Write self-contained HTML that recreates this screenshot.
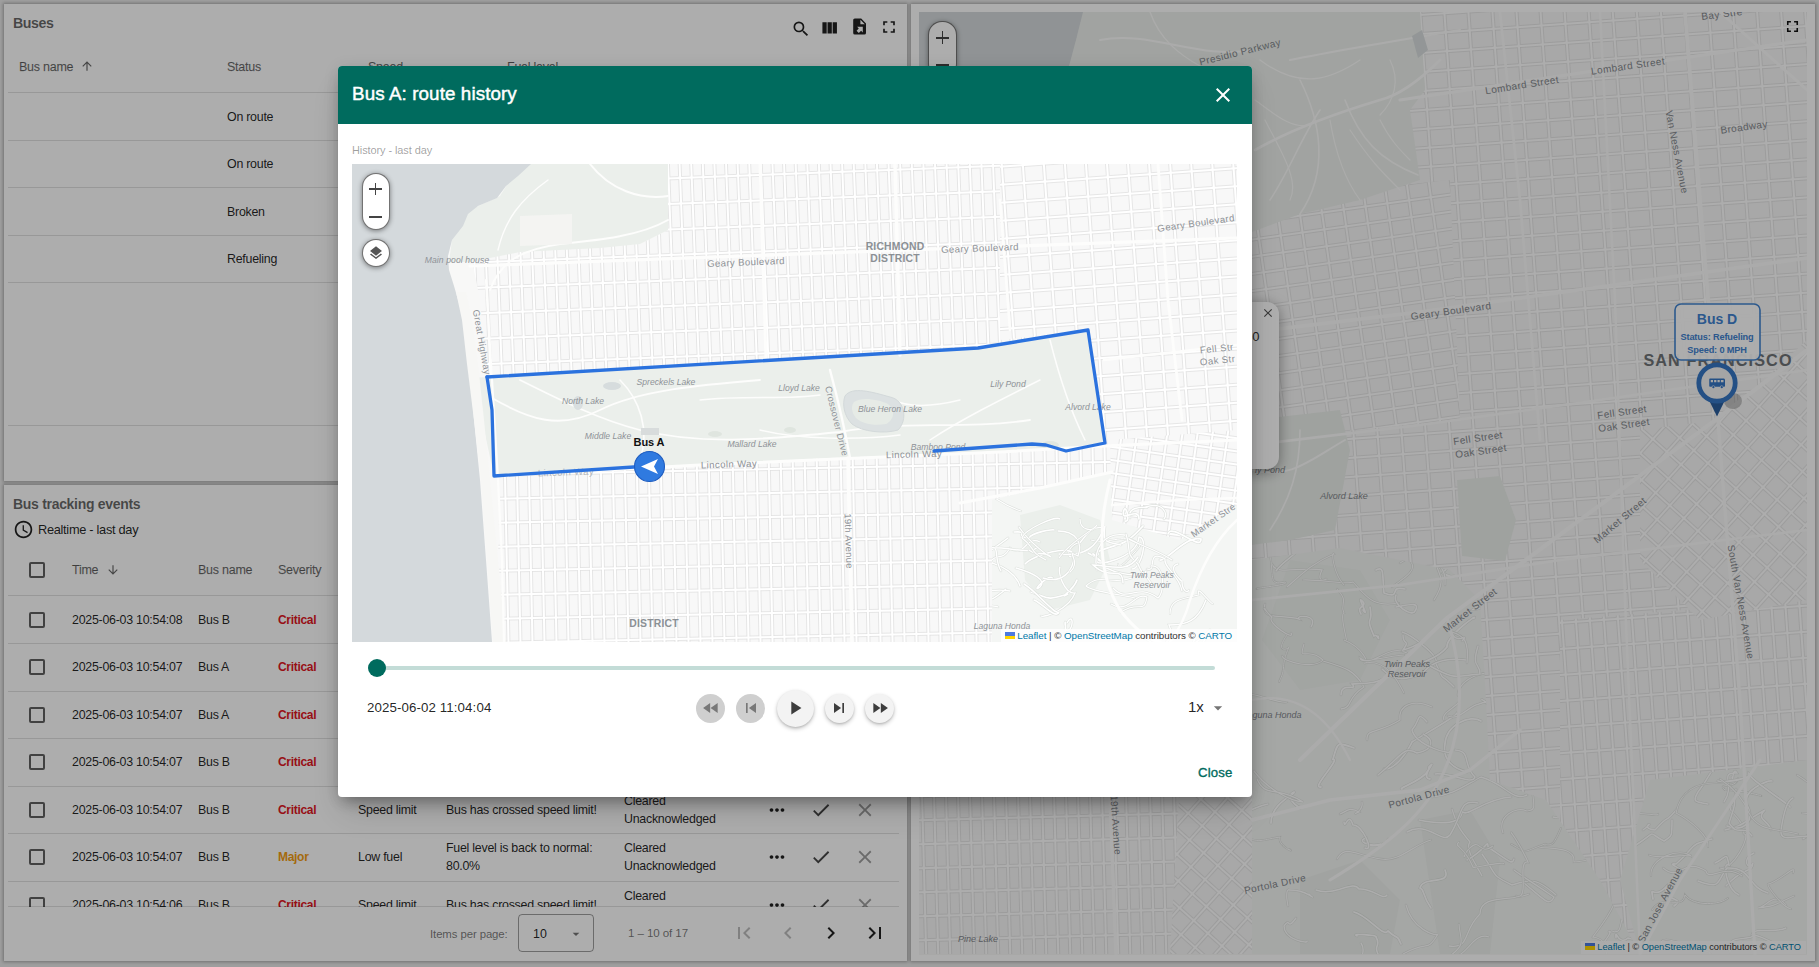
<!DOCTYPE html>
<html><head><meta charset="utf-8"><title>Bus tracking</title>
<style>
*{box-sizing:border-box;margin:0;padding:0}
html,body{width:1819px;height:967px;overflow:hidden}
body{position:relative;background:#e9e9e9;font-family:"Liberation Sans",sans-serif;color:rgba(0,0,0,.87)}
.a{position:absolute;white-space:nowrap}
.w{position:absolute;background:#fff;box-shadow:0 0 3px 1px rgba(0,0,0,.28);overflow:hidden}
.hl{position:absolute;height:1px;background:rgba(0,0,0,.12)}
.th{font-size:12.5px;color:rgba(0,0,0,.56);letter-spacing:-.25px;-webkit-text-stroke:.25px rgba(0,0,0,.4)}
.td{font-size:12.4px;color:rgba(0,0,0,.87);letter-spacing:-.25px}
.crit{color:#e0171f;font-weight:bold;font-size:12px;letter-spacing:-.3px}
.maj{color:#f39c12;font-weight:bold;font-size:12px;letter-spacing:-.3px}
.cb{position:absolute;width:16px;height:16px;border:2px solid rgba(0,0,0,.62);border-radius:2px}
svg.i{position:absolute;overflow:visible}
.ov{position:absolute;left:0;top:0;width:1819px;height:967px;background:rgba(0,0,0,.32)}
.modal{position:absolute;left:338px;top:66px;width:914px;height:731px;background:#fff;border-radius:4px;overflow:hidden;box-shadow:0 8px 14px -5px rgba(0,0,0,.32),0 18px 30px -6px rgba(0,0,0,.16),0 2px 16px 2px rgba(0,0,0,.06)}
.ml{font-size:9.5px;color:#8d9196;font-style:italic;letter-spacing:-.1px}
.mr{font-size:9.5px;color:#9a9ea2;letter-spacing:.2px}
.pbtn{position:absolute;border-radius:50%;background:#f2f2f2;box-shadow:0 2px 4px rgba(0,0,0,.25)}
</style></head>
<body>

<!-- ============ Widget 1: Buses ============ -->
<div class="w" style="left:4px;top:4px;width:903px;height:477px">
  <div class="a" style="left:9px;top:11px;font-size:14.2px;font-weight:bold;color:rgba(0,0,0,.6);letter-spacing:-.45px;line-height:16px">Buses</div>
  <!-- toolbar icons -->
  <svg class="i" style="left:787px;top:14.5px" width="20" height="20" viewBox="0 0 24 24"><path fill="rgba(0,0,0,.87)" d="M15.5 14h-.79l-.28-.27A6.471 6.471 0 0 0 16 9.5 6.5 6.5 0 1 0 9.5 16c1.61 0 3.09-.59 4.23-1.57l.27.28v.79l5 4.99L20.49 19l-4.99-5zm-6 0C7.01 14 5 11.99 5 9.5S7.01 5 9.5 5 14 7.01 14 9.5 11.99 14 9.5 14z"/></svg>
  <svg class="i" style="left:815.2px;top:14.1px" width="20.5" height="20.5" viewBox="0 0 24 24"><path fill="rgba(0,0,0,.87)" d="M10 18h5V5h-5v13zm-6 0h5V5H4v13zM16 5v13h5V5h-5z"/></svg>
  <svg class="i" style="left:845.8px;top:13.4px" width="19.2" height="19.2" viewBox="0 0 24 24"><path fill="rgba(0,0,0,.87)" d="M6 2C4.89 2 4 2.9 4 4v16a2 2 0 0 0 2 2h12a2 2 0 0 0 2-2V8l-6-6H6m7 1.5L18.5 9H13V3.5M8.9 12.2H16v7.1l-2.1-2.1-2.9 2.8-2.8-2.8 2.8-2.9-2.1-2.1z"/></svg>
  <svg class="i" style="left:874.5px;top:13.4px" width="20" height="20" viewBox="0 0 24 24"><path fill="rgba(0,0,0,.87)" d="M7 14H5v5h5v-2H7v-3zm-2-4h2V7h3V5H5v5zm12 7h-3v2h5v-5h-2v3zM14 5v2h3v3h2V5h-5z"/></svg>
  <!-- header -->
  <div class="a th" style="left:15px;top:55px;line-height:16px">Bus name</div>
  <svg class="i" style="left:76px;top:55px" width="14" height="14" viewBox="0 0 24 24"><path fill="rgba(0,0,0,.6)" d="M4 12l1.41 1.41L11 7.83V20h2V7.83l5.58 5.59L20 12l-8-8-8 8z"/></svg>
  <div class="a th" style="left:223px;top:55px;line-height:16px">Status</div>
  <div class="a th" style="left:364px;top:55px;line-height:16px">Speed</div>
  <div class="a th" style="left:503px;top:55px;line-height:16px">Fuel level</div>
  <div class="hl" style="left:4px;top:88px;width:891px"></div>
  <div class="a td" style="left:223px;top:105px;line-height:16px">On route</div>
  <div class="hl" style="left:4px;top:136px;width:891px"></div>
  <div class="a td" style="left:223px;top:152px;line-height:16px">On route</div>
  <div class="hl" style="left:4px;top:183px;width:891px"></div>
  <div class="a td" style="left:223px;top:200px;line-height:16px">Broken</div>
  <div class="hl" style="left:4px;top:231px;width:891px"></div>
  <div class="a td" style="left:223px;top:247px;line-height:16px">Refueling</div>
  <div class="hl" style="left:4px;top:278px;width:891px"></div>
  <div class="hl" style="left:4px;top:421px;width:891px"></div>
</div>

<!-- ============ Widget 2: Bus tracking events ============ -->
<div class="w" style="left:4px;top:485px;width:903px;height:476px">
  <div class="a" style="left:9px;top:11px;font-size:14px;font-weight:bold;color:rgba(0,0,0,.6);letter-spacing:-.3px;line-height:16px">Bus tracking events</div>
  <svg class="i" style="left:9px;top:34px" width="21" height="21" viewBox="0 0 24 24"><path fill="rgba(0,0,0,.87)" d="M11.99 2C6.47 2 2 6.48 2 12s4.47 10 9.99 10C17.52 22 22 17.52 22 12S17.52 2 11.99 2zM12 20c-4.42 0-8-3.58-8-8s3.58-8 8-8 8 3.58 8 8-3.58 8-8 8zm.5-13H11v6l5.25 3.15.75-1.23-4.5-2.67z"/></svg>
  <div class="a" style="left:34px;top:37px;font-size:12.8px;color:rgba(0,0,0,.87);letter-spacing:-.3px;line-height:16px">Realtime - last day</div>
  <!-- header -->
  <div class="cb" style="left:25px;top:77px"></div>
  <div class="a th" style="left:68px;top:77px;line-height:16px">Time</div>
  <svg class="i" style="left:102px;top:78px" width="14" height="14" viewBox="0 0 24 24"><path fill="rgba(0,0,0,.6)" d="M20 12l-1.41-1.41L13 16.17V4h-2v12.17l-5.58-5.59L4 12l8 8 8-8z"/></svg>
  <div class="a th" style="left:194px;top:77px;line-height:16px">Bus name</div>
  <div class="a th" style="left:274px;top:77px;line-height:16px">Severity</div>
  <div class="hl" style="left:4px;top:110px;width:891px"></div>
  <div class="cb" style="left:25px;top:126.5px"></div>
  <div class="a td" style="left:68px;top:126.5px;line-height:16px">2025-06-03 10:54:08</div>
  <div class="a td" style="left:194px;top:126.5px;line-height:16px">Bus B</div>
  <div class="a crit" style="left:274px;top:126.5px;line-height:16px">Critical</div>
  <div class="a td" style="left:354px;top:126.5px;line-height:16px">Speed limit</div>
  <div class="a td" style="left:442px;top:126.5px;line-height:16px">Bus has crossed speed limit!</div>
  <div class="a td" style="left:620px;top:117.5px;line-height:16px">Cleared</div>
  <div class="a td" style="left:620px;top:135.5px;line-height:16px">Unacknowledged</div>
  <svg class="i" style="left:762px;top:123.5px" width="22" height="22" viewBox="0 0 24 24"><path fill="rgba(0,0,0,.87)" d="M6 10c-1.1 0-2 .9-2 2s.9 2 2 2 2-.9 2-2-.9-2-2-2zm12 0c-1.1 0-2 .9-2 2s.9 2 2 2 2-.9 2-2-.9-2-2-2zm-6 0c-1.1 0-2 .9-2 2s.9 2 2 2 2-.9 2-2-.9-2-2-2z"/></svg>
  <svg class="i" style="left:806px;top:123.5px" width="22" height="22" viewBox="0 0 24 24"><path fill="rgba(0,0,0,.72)" d="M9 16.17L4.83 12l-1.42 1.41L9 19 21 7l-1.41-1.41z"/></svg>
  <svg class="i" style="left:850px;top:123.5px" width="22" height="22" viewBox="0 0 24 24"><path fill="rgba(0,0,0,.38)" d="M19 6.41L17.59 5 12 10.59 6.41 5 5 6.41 10.59 12 5 17.59 6.41 19 12 13.41 17.59 19 19 17.59 13.41 12z"/></svg>
  <div class="hl" style="left:4px;top:158.0px;width:891px"></div>
  <div class="cb" style="left:25px;top:174.0px"></div>
  <div class="a td" style="left:68px;top:174.0px;line-height:16px">2025-06-03 10:54:07</div>
  <div class="a td" style="left:194px;top:174.0px;line-height:16px">Bus A</div>
  <div class="a crit" style="left:274px;top:174.0px;line-height:16px">Critical</div>
  <div class="a td" style="left:354px;top:174.0px;line-height:16px">Speed limit</div>
  <div class="a td" style="left:442px;top:174.0px;line-height:16px">Bus has crossed speed limit!</div>
  <div class="a td" style="left:620px;top:165.0px;line-height:16px">Cleared</div>
  <div class="a td" style="left:620px;top:183.0px;line-height:16px">Unacknowledged</div>
  <svg class="i" style="left:762px;top:171.0px" width="22" height="22" viewBox="0 0 24 24"><path fill="rgba(0,0,0,.87)" d="M6 10c-1.1 0-2 .9-2 2s.9 2 2 2 2-.9 2-2-.9-2-2-2zm12 0c-1.1 0-2 .9-2 2s.9 2 2 2 2-.9 2-2-.9-2-2-2zm-6 0c-1.1 0-2 .9-2 2s.9 2 2 2 2-.9 2-2-.9-2-2-2z"/></svg>
  <svg class="i" style="left:806px;top:171.0px" width="22" height="22" viewBox="0 0 24 24"><path fill="rgba(0,0,0,.72)" d="M9 16.17L4.83 12l-1.42 1.41L9 19 21 7l-1.41-1.41z"/></svg>
  <svg class="i" style="left:850px;top:171.0px" width="22" height="22" viewBox="0 0 24 24"><path fill="rgba(0,0,0,.38)" d="M19 6.41L17.59 5 12 10.59 6.41 5 5 6.41 10.59 12 5 17.59 6.41 19 12 13.41 17.59 19 19 17.59 13.41 12z"/></svg>
  <div class="hl" style="left:4px;top:205.5px;width:891px"></div>
  <div class="cb" style="left:25px;top:221.5px"></div>
  <div class="a td" style="left:68px;top:221.5px;line-height:16px">2025-06-03 10:54:07</div>
  <div class="a td" style="left:194px;top:221.5px;line-height:16px">Bus A</div>
  <div class="a crit" style="left:274px;top:221.5px;line-height:16px">Critical</div>
  <div class="a td" style="left:354px;top:221.5px;line-height:16px">Low fuel</div>
  <div class="a td" style="left:442px;top:221.5px;line-height:16px">Fuel level is low: 15.0%</div>
  <div class="a td" style="left:620px;top:212.5px;line-height:16px">Cleared</div>
  <div class="a td" style="left:620px;top:230.5px;line-height:16px">Unacknowledged</div>
  <svg class="i" style="left:762px;top:218.5px" width="22" height="22" viewBox="0 0 24 24"><path fill="rgba(0,0,0,.87)" d="M6 10c-1.1 0-2 .9-2 2s.9 2 2 2 2-.9 2-2-.9-2-2-2zm12 0c-1.1 0-2 .9-2 2s.9 2 2 2 2-.9 2-2-.9-2-2-2zm-6 0c-1.1 0-2 .9-2 2s.9 2 2 2 2-.9 2-2-.9-2-2-2z"/></svg>
  <svg class="i" style="left:806px;top:218.5px" width="22" height="22" viewBox="0 0 24 24"><path fill="rgba(0,0,0,.72)" d="M9 16.17L4.83 12l-1.42 1.41L9 19 21 7l-1.41-1.41z"/></svg>
  <svg class="i" style="left:850px;top:218.5px" width="22" height="22" viewBox="0 0 24 24"><path fill="rgba(0,0,0,.38)" d="M19 6.41L17.59 5 12 10.59 6.41 5 5 6.41 10.59 12 5 17.59 6.41 19 12 13.41 17.59 19 19 17.59 13.41 12z"/></svg>
  <div class="hl" style="left:4px;top:253.0px;width:891px"></div>
  <div class="cb" style="left:25px;top:269.0px"></div>
  <div class="a td" style="left:68px;top:269.0px;line-height:16px">2025-06-03 10:54:07</div>
  <div class="a td" style="left:194px;top:269.0px;line-height:16px">Bus B</div>
  <div class="a crit" style="left:274px;top:269.0px;line-height:16px">Critical</div>
  <div class="a td" style="left:354px;top:269.0px;line-height:16px">Speed limit</div>
  <div class="a td" style="left:442px;top:269.0px;line-height:16px">Bus has crossed speed limit!</div>
  <div class="a td" style="left:620px;top:260.0px;line-height:16px">Cleared</div>
  <div class="a td" style="left:620px;top:278.0px;line-height:16px">Unacknowledged</div>
  <svg class="i" style="left:762px;top:266.0px" width="22" height="22" viewBox="0 0 24 24"><path fill="rgba(0,0,0,.87)" d="M6 10c-1.1 0-2 .9-2 2s.9 2 2 2 2-.9 2-2-.9-2-2-2zm12 0c-1.1 0-2 .9-2 2s.9 2 2 2 2-.9 2-2-.9-2-2-2zm-6 0c-1.1 0-2 .9-2 2s.9 2 2 2 2-.9 2-2-.9-2-2-2z"/></svg>
  <svg class="i" style="left:806px;top:266.0px" width="22" height="22" viewBox="0 0 24 24"><path fill="rgba(0,0,0,.72)" d="M9 16.17L4.83 12l-1.42 1.41L9 19 21 7l-1.41-1.41z"/></svg>
  <svg class="i" style="left:850px;top:266.0px" width="22" height="22" viewBox="0 0 24 24"><path fill="rgba(0,0,0,.38)" d="M19 6.41L17.59 5 12 10.59 6.41 5 5 6.41 10.59 12 5 17.59 6.41 19 12 13.41 17.59 19 19 17.59 13.41 12z"/></svg>
  <div class="hl" style="left:4px;top:300.5px;width:891px"></div>
  <div class="cb" style="left:25px;top:316.5px"></div>
  <div class="a td" style="left:68px;top:316.5px;line-height:16px">2025-06-03 10:54:07</div>
  <div class="a td" style="left:194px;top:316.5px;line-height:16px">Bus B</div>
  <div class="a crit" style="left:274px;top:316.5px;line-height:16px">Critical</div>
  <div class="a td" style="left:354px;top:316.5px;line-height:16px">Speed limit</div>
  <div class="a td" style="left:442px;top:316.5px;line-height:16px">Bus has crossed speed limit!</div>
  <div class="a td" style="left:620px;top:307.5px;line-height:16px">Cleared</div>
  <div class="a td" style="left:620px;top:325.5px;line-height:16px">Unacknowledged</div>
  <svg class="i" style="left:762px;top:313.5px" width="22" height="22" viewBox="0 0 24 24"><path fill="rgba(0,0,0,.87)" d="M6 10c-1.1 0-2 .9-2 2s.9 2 2 2 2-.9 2-2-.9-2-2-2zm12 0c-1.1 0-2 .9-2 2s.9 2 2 2 2-.9 2-2-.9-2-2-2zm-6 0c-1.1 0-2 .9-2 2s.9 2 2 2 2-.9 2-2-.9-2-2-2z"/></svg>
  <svg class="i" style="left:806px;top:313.5px" width="22" height="22" viewBox="0 0 24 24"><path fill="rgba(0,0,0,.72)" d="M9 16.17L4.83 12l-1.42 1.41L9 19 21 7l-1.41-1.41z"/></svg>
  <svg class="i" style="left:850px;top:313.5px" width="22" height="22" viewBox="0 0 24 24"><path fill="rgba(0,0,0,.38)" d="M19 6.41L17.59 5 12 10.59 6.41 5 5 6.41 10.59 12 5 17.59 6.41 19 12 13.41 17.59 19 19 17.59 13.41 12z"/></svg>
  <div class="hl" style="left:4px;top:348.0px;width:891px"></div>
  <div class="cb" style="left:25px;top:364.0px"></div>
  <div class="a td" style="left:68px;top:364.0px;line-height:16px">2025-06-03 10:54:07</div>
  <div class="a td" style="left:194px;top:364.0px;line-height:16px">Bus B</div>
  <div class="a maj" style="left:274px;top:364.0px;line-height:16px">Major</div>
  <div class="a td" style="left:354px;top:364.0px;line-height:16px">Low fuel</div>
  <div class="a td" style="left:442px;top:355.0px;line-height:16px">Fuel level is back to normal:</div>
  <div class="a td" style="left:442px;top:373.0px;line-height:16px">80.0%</div>
  <div class="a td" style="left:620px;top:355.0px;line-height:16px">Cleared</div>
  <div class="a td" style="left:620px;top:373.0px;line-height:16px">Unacknowledged</div>
  <svg class="i" style="left:762px;top:361.0px" width="22" height="22" viewBox="0 0 24 24"><path fill="rgba(0,0,0,.87)" d="M6 10c-1.1 0-2 .9-2 2s.9 2 2 2 2-.9 2-2-.9-2-2-2zm12 0c-1.1 0-2 .9-2 2s.9 2 2 2 2-.9 2-2-.9-2-2-2zm-6 0c-1.1 0-2 .9-2 2s.9 2 2 2 2-.9 2-2-.9-2-2-2z"/></svg>
  <svg class="i" style="left:806px;top:361.0px" width="22" height="22" viewBox="0 0 24 24"><path fill="rgba(0,0,0,.72)" d="M9 16.17L4.83 12l-1.42 1.41L9 19 21 7l-1.41-1.41z"/></svg>
  <svg class="i" style="left:850px;top:361.0px" width="22" height="22" viewBox="0 0 24 24"><path fill="rgba(0,0,0,.38)" d="M19 6.41L17.59 5 12 10.59 6.41 5 5 6.41 10.59 12 5 17.59 6.41 19 12 13.41 17.59 19 19 17.59 13.41 12z"/></svg>
  <div class="hl" style="left:4px;top:395.5px;width:891px"></div>
  <div class="cb" style="left:25px;top:411.5px"></div>
  <div class="a td" style="left:68px;top:411.5px;line-height:16px">2025-06-03 10:54:06</div>
  <div class="a td" style="left:194px;top:411.5px;line-height:16px">Bus B</div>
  <div class="a crit" style="left:274px;top:411.5px;line-height:16px">Critical</div>
  <div class="a td" style="left:354px;top:411.5px;line-height:16px">Speed limit</div>
  <div class="a td" style="left:442px;top:411.5px;line-height:16px">Bus has crossed speed limit!</div>
  <div class="a td" style="left:620px;top:402.5px;line-height:16px">Cleared</div>
  <div class="a td" style="left:620px;top:420.5px;line-height:16px">Unacknowledged</div>
  <svg class="i" style="left:762px;top:408.5px" width="22" height="22" viewBox="0 0 24 24"><path fill="rgba(0,0,0,.87)" d="M6 10c-1.1 0-2 .9-2 2s.9 2 2 2 2-.9 2-2-.9-2-2-2zm12 0c-1.1 0-2 .9-2 2s.9 2 2 2 2-.9 2-2-.9-2-2-2zm-6 0c-1.1 0-2 .9-2 2s.9 2 2 2 2-.9 2-2-.9-2-2-2z"/></svg>
  <svg class="i" style="left:806px;top:408.5px" width="22" height="22" viewBox="0 0 24 24"><path fill="rgba(0,0,0,.72)" d="M9 16.17L4.83 12l-1.42 1.41L9 19 21 7l-1.41-1.41z"/></svg>
  <svg class="i" style="left:850px;top:408.5px" width="22" height="22" viewBox="0 0 24 24"><path fill="rgba(0,0,0,.38)" d="M19 6.41L17.59 5 12 10.59 6.41 5 5 6.41 10.59 12 5 17.59 6.41 19 12 13.41 17.59 19 19 17.59 13.41 12z"/></svg>
  <div class="a" style="left:0;top:422px;width:903px;height:54px;background:#fff"></div>
  <div class="hl" style="left:4px;top:421px;width:891px"></div>
  <!-- paginator -->
  <div class="a" style="left:426px;top:441px;font-size:11.4px;color:rgba(0,0,0,.54);letter-spacing:-.1px;line-height:16px">Items per page:</div>
  <div class="a" style="left:514px;top:429px;width:76px;height:38px;border:1px solid rgba(0,0,0,.38);border-radius:4px"></div>
  <div class="a" style="left:529px;top:441px;font-size:12.4px;color:rgba(0,0,0,.87);line-height:16px">10</div>
  <svg class="i" style="left:564px;top:441px" width="16" height="16" viewBox="0 0 24 24"><path fill="rgba(0,0,0,.54)" d="M7 10l5 5 5-5z"/></svg>
  <div class="a" style="left:624px;top:440px;font-size:11.6px;color:rgba(0,0,0,.54);letter-spacing:-.1px;line-height:16px">1 – 10 of 17</div>
  <svg class="i" style="left:728px;top:436px" width="24" height="24" viewBox="0 0 24 24"><path fill="rgba(0,0,0,.26)" d="M18.41 16.59L13.82 12l4.59-4.59L17 6l-6 6 6 6zM6 6h2v12H6z"/></svg>
  <svg class="i" style="left:772px;top:436px" width="24" height="24" viewBox="0 0 24 24"><path fill="rgba(0,0,0,.26)" d="M15.41 7.41L14 6l-6 6 6 6 1.41-1.41L10.83 12z"/></svg>
  <svg class="i" style="left:815px;top:436px" width="24" height="24" viewBox="0 0 24 24"><path fill="rgba(0,0,0,.87)" d="M10 6L8.59 7.41 13.17 12l-4.58 4.59L10 18l6-6z"/></svg>
  <svg class="i" style="left:859px;top:436px" width="24" height="24" viewBox="0 0 24 24"><path fill="rgba(0,0,0,.87)" d="M5.59 7.41L10.18 12l-4.59 4.59L7 18l6-6-6-6zM16 6h2v12h-2z"/></svg>
</div>

<!-- ============ Widget 3: Map ============ -->
<div class="w" style="left:911px;top:4px;width:904px;height:957px">
  <svg width="888" height="943" style="position:absolute;left:8px;top:8px;font-family:'Liberation Sans',sans-serif">
<defs>
<pattern id="rg" patternUnits="userSpaceOnUse" width="24.0" height="19.0" patternTransform="translate(0,0) rotate(-4)"><rect width="24.0" height="19.0" fill="#ffffff"/><rect x="1.4500000000000002" y="1.4500000000000002" width="21.1" height="16.1" fill="#f8f8f8" stroke="#dedede" stroke-width="0.7"/></pattern>
<pattern id="rg2" patternUnits="userSpaceOnUse" width="22.0" height="17.0" patternTransform="translate(4,3) rotate(-8)"><rect width="22.0" height="17.0" fill="#ffffff"/><rect x="1.4500000000000002" y="1.4500000000000002" width="19.1" height="14.100000000000001" fill="#f8f8f8" stroke="#dedede" stroke-width="0.7"/></pattern>
<pattern id="rd" patternUnits="userSpaceOnUse" width="19.0" height="19.0" patternTransform="translate(2,1) rotate(42)"><rect width="19.0" height="19.0" fill="#ffffff"/><rect x="1.4500000000000002" y="1.4500000000000002" width="16.1" height="16.1" fill="#f8f8f8" stroke="#dedede" stroke-width="0.7"/></pattern>
<pattern id="rm" patternUnits="userSpaceOnUse" width="14.0" height="26.0" patternTransform="translate(3,2) rotate(-4)"><rect width="14.0" height="26.0" fill="#ffffff"/><rect x="1.4500000000000002" y="1.4500000000000002" width="11.100000000000001" height="23.1" fill="#f8f8f8" stroke="#dedede" stroke-width="0.7"/></pattern>
<pattern id="rs" patternUnits="userSpaceOnUse" width="12.0" height="24.0" patternTransform="translate(1,4) rotate(-1.5)"><rect width="12.0" height="24.0" fill="#ffffff"/><rect x="1.4500000000000002" y="1.4500000000000002" width="9.100000000000001" height="21.1" fill="#f8f8f8" stroke="#dedede" stroke-width="0.7"/></pattern>
</defs>
<g transform="translate(-919,-12)">
<rect x="919" y="12" width="888" height="943" fill="#f8f8f7"/>
<polygon points="919.0,12.0 1807.0,12.0 1807.0,954.0 919.0,954.0" fill="url(#rg)" />
<polygon points="1252.0,200.0 1450.0,180.0 1460.0,420.0 1252.0,440.0" fill="url(#rg2)" />
<polygon points="1560.0,620.0 1807.0,600.0 1807.0,954.0 1560.0,954.0" fill="url(#rm)" />
<polygon points="1640.0,430.0 1720.0,420.0 1807.0,340.0 1807.0,600.0 1700.0,620.0 1640.0,560.0" fill="url(#rd)" />
<polygon points="919.0,780.0 1190.0,780.0 1180.0,954.0 919.0,954.0" fill="url(#rs)" />
<polygon points="1180.0,780.0 1252.0,780.0 1252.0,954.0 1170.0,954.0" fill="url(#rd)" />
<polygon points="1083.0,12.0 1420.0,12.0 1425.0,90.0 1410.0,110.0 1420.0,180.0 1360.0,200.0 1300.0,214.0 1252.0,232.0 919.0,240.0 919.0,70.0 1068.0,70.0" fill="#edf1ed" />
<path d="M1255 150 C1290 130 1330 115 1380 100 C1400 95 1420 80 1440 60" fill="none" stroke="#fdfdfc" stroke-width="2.6" stroke-linecap="round"/>
<path d="M1270 200 C1290 170 1300 140 1320 110" fill="none" stroke="#fdfdfc" stroke-width="1.6" stroke-linecap="round"/>
<path d="M1300 80 C1320 120 1330 170 1300 214" fill="none" stroke="#fdfdfc" stroke-width="1.6" stroke-linecap="round"/>
<path d="M1345 100 C1360 140 1380 160 1418 175" fill="none" stroke="#fdfdfc" stroke-width="1.6" stroke-linecap="round"/>
<path d="M1290 60 C1340 50 1400 40 1460 30" fill="none" stroke="#fdfdfc" stroke-width="2.2" stroke-linecap="round"/>
<path d="M1330 120 C1335 150 1345 180 1360 200" fill="none" stroke="#fdfdfc" stroke-width="1.2" stroke-linecap="round"/>
<path d="M1350 130 C1370 160 1380 170 1400 190" fill="none" stroke="#fdfdfc" stroke-width="1.2" stroke-linecap="round"/>
<path d="M1265 120 C1280 150 1300 180 1290 200" fill="none" stroke="#fdfdfc" stroke-width="1.2" stroke-linecap="round"/>
<path d="M1380 120 C1390 140 1400 150 1410 160" fill="none" stroke="#fdfdfc" stroke-width="1.2" stroke-linecap="round"/>
<path d="M1100 40 C1150 30 1200 60 1252 50" fill="none" stroke="#fdfdfc" stroke-width="2.0" stroke-linecap="round"/>
<path d="M1150 12 C1160 40 1180 55 1200 66" fill="none" stroke="#fdfdfc" stroke-width="1.4" stroke-linecap="round"/>
<path d="M1260 60 C1300 90 1330 80 1360 60" fill="none" stroke="#fdfdfc" stroke-width="1.3" stroke-linecap="round"/>
<path d="M1255 100 C1270 110 1290 130 1310 125" fill="none" stroke="#fdfdfc" stroke-width="1.2" stroke-linecap="round"/>
<path d="M1390 60 C1400 80 1395 100 1380 115" fill="none" stroke="#fdfdfc" stroke-width="1.2" stroke-linecap="round"/>
<polygon points="919.0,12.0 1083.0,12.0 1076.0,40.0 1068.0,70.0 919.0,70.0" fill="#d4d9dc" />
<polygon points="1412.0,36.0 1422.0,30.0 1428.0,50.0 1418.0,58.0" fill="#d9dedf" />
<polygon points="1252.0,420.0 1340.0,410.0 1350.0,450.0 1335.0,530.0 1290.0,540.0 1252.0,545.0" fill="#ebefeb" />
<path d="M1252 470 C1290 480 1310 460 1345 440" fill="none" stroke="#fdfdfc" stroke-width="1.8" stroke-linecap="round"/>
<path d="M1270 530 C1290 500 1300 470 1300 430" fill="none" stroke="#fdfdfc" stroke-width="1.6" stroke-linecap="round"/>
<polygon points="1457.0,480.0 1500.0,476.0 1516.0,520.0 1505.0,561.0 1462.0,556.0" fill="#ebefeb" />
<polygon points="1252.0,560.0 1340.0,548.0 1450.0,570.0 1480.0,600.0 1486.0,700.0 1490.0,780.0 1546.0,800.0 1600.0,880.0 1640.0,954.0 1252.0,954.0" fill="#f4f6f4" />
<polygon points="1290.0,560.0 1360.0,570.0 1390.0,620.0 1360.0,680.0 1300.0,690.0 1262.0,640.0" fill="#eff3ef" />
<polygon points="1300.0,880.0 1360.0,860.0 1400.0,900.0 1390.0,954.0 1300.0,954.0" fill="#edf1ed" />
<polygon points="1420.0,820.0 1470.0,810.0 1500.0,860.0 1490.0,954.0 1440.0,954.0" fill="#edf1ed" />
<clipPath id="rhc"><polygon points="1252.0,560.0 1340.0,548.0 1450.0,570.0 1480.0,600.0 1486.0,700.0 1490.0,780.0 1546.0,800.0 1600.0,880.0 1640.0,954.0 1252.0,954.0"/></clipPath>
<g clip-path="url(#rhc)"><path d="M1482 854 C1498 876 1489 874 1512 885 C1537 876 1542 884 1556 895" fill="none" stroke="#dde1dd" stroke-width="2.5" stroke-linecap="round"/><path d="M1482 854 C1498 876 1489 874 1512 885 C1537 876 1542 884 1556 895" fill="none" stroke="#ffffff" stroke-width="1.4" stroke-linecap="round"/><path d="M1464 570 C1468 573 1434 568 1436 555 C1414 542 1422 552 1400 563" fill="none" stroke="#dde1dd" stroke-width="2.3" stroke-linecap="round"/><path d="M1464 570 C1468 573 1434 568 1436 555 C1414 542 1422 552 1400 563" fill="none" stroke="#ffffff" stroke-width="1.2" stroke-linecap="round"/><path d="M1614 904 C1608 919 1590 940 1593 937 C1610 940 1602 950 1612 969" fill="none" stroke="#dde1dd" stroke-width="2.2" stroke-linecap="round"/><path d="M1614 904 C1608 919 1590 940 1593 937 C1610 940 1602 950 1612 969" fill="none" stroke="#ffffff" stroke-width="1.1" stroke-linecap="round"/><path d="M1279 682 C1287 667 1280 667 1289 647 C1288 650 1274 653 1287 635" fill="none" stroke="#dde1dd" stroke-width="2.1" stroke-linecap="round"/><path d="M1279 682 C1287 667 1280 667 1289 647 C1288 650 1274 653 1287 635" fill="none" stroke="#ffffff" stroke-width="1.0" stroke-linecap="round"/><path d="M1529 894 C1510 902 1480 894 1480 914 C1462 931 1471 949 1449 946" fill="none" stroke="#dde1dd" stroke-width="2.4" stroke-linecap="round"/><path d="M1529 894 C1510 902 1480 894 1480 914 C1462 931 1471 949 1449 946" fill="none" stroke="#ffffff" stroke-width="1.3" stroke-linecap="round"/><path d="M1384 769 C1400 770 1415 736 1412 742 C1421 736 1456 717 1457 713" fill="none" stroke="#dde1dd" stroke-width="2.8" stroke-linecap="round"/><path d="M1384 769 C1400 770 1415 736 1412 742 C1421 736 1456 717 1457 713" fill="none" stroke="#ffffff" stroke-width="1.7" stroke-linecap="round"/><path d="M1454 687 C1436 669 1447 686 1436 664 C1440 655 1409 634 1402 632" fill="none" stroke="#dde1dd" stroke-width="2.6" stroke-linecap="round"/><path d="M1454 687 C1436 669 1447 686 1436 664 C1440 655 1409 634 1402 632" fill="none" stroke="#ffffff" stroke-width="1.5" stroke-linecap="round"/><path d="M1557 742 C1567 719 1551 731 1549 711 C1551 720 1532 711 1512 727" fill="none" stroke="#dde1dd" stroke-width="2.4" stroke-linecap="round"/><path d="M1557 742 C1567 719 1551 731 1549 711 C1551 720 1532 711 1512 727" fill="none" stroke="#ffffff" stroke-width="1.3" stroke-linecap="round"/><path d="M1309 894 C1318 903 1309 890 1289 890 C1288 889 1285 891 1288 906" fill="none" stroke="#dde1dd" stroke-width="2.4" stroke-linecap="round"/><path d="M1309 894 C1318 903 1309 890 1289 890 C1288 889 1285 891 1288 906" fill="none" stroke="#ffffff" stroke-width="1.3" stroke-linecap="round"/><path d="M1616 938 C1615 926 1618 947 1628 938 C1648 944 1660 936 1665 929" fill="none" stroke="#dde1dd" stroke-width="2.7" stroke-linecap="round"/><path d="M1616 938 C1615 926 1618 947 1628 938 C1648 944 1660 936 1665 929" fill="none" stroke="#ffffff" stroke-width="1.6" stroke-linecap="round"/><path d="M1388 839 C1389 844 1366 852 1366 838 C1356 841 1369 847 1381 844" fill="none" stroke="#dde1dd" stroke-width="2.5" stroke-linecap="round"/><path d="M1388 839 C1389 844 1366 852 1366 838 C1356 841 1369 847 1381 844" fill="none" stroke="#ffffff" stroke-width="1.4" stroke-linecap="round"/><path d="M1553 817 C1566 821 1584 805 1583 806 C1599 828 1621 825 1617 832" fill="none" stroke="#dde1dd" stroke-width="2.5" stroke-linecap="round"/><path d="M1553 817 C1566 821 1584 805 1583 806 C1599 828 1621 825 1617 832" fill="none" stroke="#ffffff" stroke-width="1.4" stroke-linecap="round"/><path d="M1316 890 C1335 897 1353 879 1359 889 C1373 888 1383 901 1387 895" fill="none" stroke="#dde1dd" stroke-width="2.6" stroke-linecap="round"/><path d="M1316 890 C1335 897 1353 879 1359 889 C1373 888 1383 901 1387 895" fill="none" stroke="#ffffff" stroke-width="1.5" stroke-linecap="round"/><path d="M1518 576 C1512 566 1500 577 1484 572 C1462 558 1441 565 1438 570" fill="none" stroke="#dde1dd" stroke-width="2.2" stroke-linecap="round"/><path d="M1518 576 C1512 566 1500 577 1484 572 C1462 558 1441 565 1438 570" fill="none" stroke="#ffffff" stroke-width="1.1" stroke-linecap="round"/><path d="M1326 579 C1328 579 1315 585 1322 570 C1300 566 1276 576 1272 564" fill="none" stroke="#dde1dd" stroke-width="2.4" stroke-linecap="round"/><path d="M1326 579 C1328 579 1315 585 1322 570 C1300 566 1276 576 1272 564" fill="none" stroke="#ffffff" stroke-width="1.3" stroke-linecap="round"/><path d="M1268 804 C1251 807 1254 815 1228 807 C1229 809 1211 825 1220 829" fill="none" stroke="#dde1dd" stroke-width="2.6" stroke-linecap="round"/><path d="M1268 804 C1251 807 1254 815 1228 807 C1229 809 1211 825 1220 829" fill="none" stroke="#ffffff" stroke-width="1.5" stroke-linecap="round"/><path d="M1604 942 C1619 923 1600 936 1615 931 C1623 935 1620 911 1627 906" fill="none" stroke="#dde1dd" stroke-width="2.3" stroke-linecap="round"/><path d="M1604 942 C1619 923 1600 936 1615 931 C1623 935 1620 911 1627 906" fill="none" stroke="#ffffff" stroke-width="1.2" stroke-linecap="round"/><path d="M1361 943 C1370 956 1346 980 1349 976 C1344 988 1349 965 1349 970" fill="none" stroke="#dde1dd" stroke-width="2.5" stroke-linecap="round"/><path d="M1361 943 C1370 956 1346 980 1349 976 C1344 988 1349 965 1349 970" fill="none" stroke="#ffffff" stroke-width="1.4" stroke-linecap="round"/><path d="M1299 807 C1306 812 1281 798 1294 792 C1296 794 1271 803 1271 823" fill="none" stroke="#dde1dd" stroke-width="2.9" stroke-linecap="round"/><path d="M1299 807 C1306 812 1281 798 1294 792 C1296 794 1271 803 1271 823" fill="none" stroke="#ffffff" stroke-width="1.8" stroke-linecap="round"/><path d="M1362 802 C1364 812 1349 816 1359 812 C1349 806 1346 812 1340 814" fill="none" stroke="#dde1dd" stroke-width="2.4" stroke-linecap="round"/><path d="M1362 802 C1364 812 1349 816 1359 812 C1349 806 1346 812 1340 814" fill="none" stroke="#ffffff" stroke-width="1.3" stroke-linecap="round"/><path d="M1527 795 C1512 802 1506 784 1481 777 C1464 786 1453 795 1432 797" fill="none" stroke="#dde1dd" stroke-width="2.5" stroke-linecap="round"/><path d="M1527 795 C1512 802 1506 784 1481 777 C1464 786 1453 795 1432 797" fill="none" stroke="#ffffff" stroke-width="1.4" stroke-linecap="round"/><path d="M1588 715 C1575 716 1590 719 1577 740 C1585 737 1609 761 1611 753" fill="none" stroke="#dde1dd" stroke-width="2.2" stroke-linecap="round"/><path d="M1588 715 C1575 716 1590 719 1577 740 C1585 737 1609 761 1611 753" fill="none" stroke="#ffffff" stroke-width="1.1" stroke-linecap="round"/><path d="M1430 779 C1419 778 1439 757 1429 767 C1430 778 1396 789 1402 789" fill="none" stroke="#dde1dd" stroke-width="2.9" stroke-linecap="round"/><path d="M1430 779 C1419 778 1439 757 1429 767 C1430 778 1396 789 1402 789" fill="none" stroke="#ffffff" stroke-width="1.8" stroke-linecap="round"/><path d="M1619 838 C1597 849 1601 861 1574 862 C1576 847 1552 849 1538 847" fill="none" stroke="#dde1dd" stroke-width="2.2" stroke-linecap="round"/><path d="M1619 838 C1597 849 1601 861 1574 862 C1576 847 1552 849 1538 847" fill="none" stroke="#ffffff" stroke-width="1.1" stroke-linecap="round"/><path d="M1482 582 C1458 566 1457 583 1443 573 C1452 560 1472 555 1481 548" fill="none" stroke="#dde1dd" stroke-width="2.9" stroke-linecap="round"/><path d="M1482 582 C1458 566 1457 583 1443 573 C1452 560 1472 555 1481 548" fill="none" stroke="#ffffff" stroke-width="1.8" stroke-linecap="round"/><path d="M1392 587 C1401 580 1418 571 1411 562 C1416 550 1427 551 1423 546" fill="none" stroke="#dde1dd" stroke-width="2.2" stroke-linecap="round"/><path d="M1392 587 C1401 580 1418 571 1411 562 C1416 550 1427 551 1423 546" fill="none" stroke="#ffffff" stroke-width="1.1" stroke-linecap="round"/><path d="M1341 709 C1354 707 1345 699 1364 687 C1355 671 1347 668 1323 661" fill="none" stroke="#dde1dd" stroke-width="2.4" stroke-linecap="round"/><path d="M1341 709 C1354 707 1345 699 1364 687 C1355 671 1347 668 1323 661" fill="none" stroke="#ffffff" stroke-width="1.3" stroke-linecap="round"/><path d="M1546 576 C1542 581 1567 546 1568 545 C1562 565 1531 572 1530 578" fill="none" stroke="#dde1dd" stroke-width="2.4" stroke-linecap="round"/><path d="M1546 576 C1542 581 1567 546 1568 545 C1562 565 1531 572 1530 578" fill="none" stroke="#ffffff" stroke-width="1.3" stroke-linecap="round"/><path d="M1341 695 C1341 681 1359 692 1352 684 C1372 683 1376 683 1383 679" fill="none" stroke="#dde1dd" stroke-width="2.7" stroke-linecap="round"/><path d="M1341 695 C1341 681 1359 692 1352 684 C1372 683 1376 683 1383 679" fill="none" stroke="#ffffff" stroke-width="1.6" stroke-linecap="round"/><path d="M1399 603 C1372 608 1366 596 1353 582 C1349 585 1316 579 1303 580" fill="none" stroke="#dde1dd" stroke-width="2.2" stroke-linecap="round"/><path d="M1399 603 C1372 608 1366 596 1353 582 C1349 585 1316 579 1303 580" fill="none" stroke="#ffffff" stroke-width="1.1" stroke-linecap="round"/><path d="M1311 627 C1319 614 1295 615 1299 619 C1281 614 1261 621 1265 604" fill="none" stroke="#dde1dd" stroke-width="2.4" stroke-linecap="round"/><path d="M1311 627 C1319 614 1295 615 1299 619 C1281 614 1261 621 1265 604" fill="none" stroke="#ffffff" stroke-width="1.3" stroke-linecap="round"/><path d="M1597 833 C1616 820 1615 825 1615 831 C1610 826 1613 834 1632 847" fill="none" stroke="#dde1dd" stroke-width="2.2" stroke-linecap="round"/><path d="M1597 833 C1616 820 1615 825 1615 831 C1610 826 1613 834 1632 847" fill="none" stroke="#ffffff" stroke-width="1.1" stroke-linecap="round"/><path d="M1401 944 C1396 933 1399 941 1388 931 C1383 938 1369 916 1354 912" fill="none" stroke="#dde1dd" stroke-width="2.9" stroke-linecap="round"/><path d="M1401 944 C1396 933 1399 941 1388 931 C1383 938 1369 916 1354 912" fill="none" stroke="#ffffff" stroke-width="1.8" stroke-linecap="round"/><path d="M1257 589 C1252 588 1292 585 1285 582 C1268 586 1274 576 1270 554" fill="none" stroke="#dde1dd" stroke-width="2.1" stroke-linecap="round"/><path d="M1257 589 C1252 588 1292 585 1285 582 C1268 586 1274 576 1270 554" fill="none" stroke="#ffffff" stroke-width="1.0" stroke-linecap="round"/><path d="M1344 585 C1333 573 1331 550 1334 554 C1310 564 1298 578 1287 587" fill="none" stroke="#dde1dd" stroke-width="2.2" stroke-linecap="round"/><path d="M1344 585 C1333 573 1331 550 1334 554 C1310 564 1298 578 1287 587" fill="none" stroke="#ffffff" stroke-width="1.1" stroke-linecap="round"/><path d="M1370 607 C1374 627 1364 613 1374 636 C1377 633 1380 643 1378 636" fill="none" stroke="#dde1dd" stroke-width="2.8" stroke-linecap="round"/><path d="M1370 607 C1374 627 1364 613 1374 636 C1377 633 1380 643 1378 636" fill="none" stroke="#ffffff" stroke-width="1.7" stroke-linecap="round"/><path d="M1367 740 C1366 728 1378 734 1400 720 C1398 704 1415 699 1432 707" fill="none" stroke="#dde1dd" stroke-width="2.4" stroke-linecap="round"/><path d="M1367 740 C1366 728 1378 734 1400 720 C1398 704 1415 699 1432 707" fill="none" stroke="#ffffff" stroke-width="1.3" stroke-linecap="round"/><path d="M1466 660 C1439 656 1428 666 1422 674 C1404 680 1395 682 1382 669" fill="none" stroke="#dde1dd" stroke-width="2.6" stroke-linecap="round"/><path d="M1466 660 C1439 656 1428 666 1422 674 C1404 680 1395 682 1382 669" fill="none" stroke="#ffffff" stroke-width="1.5" stroke-linecap="round"/><path d="M1532 789 C1535 809 1535 810 1527 811 C1516 806 1497 816 1503 833" fill="none" stroke="#dde1dd" stroke-width="2.3" stroke-linecap="round"/><path d="M1532 789 C1535 809 1535 810 1527 811 C1516 806 1497 816 1503 833" fill="none" stroke="#ffffff" stroke-width="1.2" stroke-linecap="round"/><path d="M1502 676 C1490 667 1458 678 1458 695 C1467 705 1440 710 1444 720" fill="none" stroke="#dde1dd" stroke-width="2.4" stroke-linecap="round"/><path d="M1502 676 C1490 667 1458 678 1458 695 C1467 705 1440 710 1444 720" fill="none" stroke="#ffffff" stroke-width="1.3" stroke-linecap="round"/><path d="M1376 570 C1385 565 1382 576 1384 593 C1403 600 1387 585 1405 589" fill="none" stroke="#dde1dd" stroke-width="2.8" stroke-linecap="round"/><path d="M1376 570 C1385 565 1382 576 1384 593 C1403 600 1387 585 1405 589" fill="none" stroke="#ffffff" stroke-width="1.7" stroke-linecap="round"/><path d="M1423 734 C1435 740 1433 750 1417 753 C1403 746 1404 754 1378 775" fill="none" stroke="#dde1dd" stroke-width="2.6" stroke-linecap="round"/><path d="M1423 734 C1435 740 1433 750 1417 753 C1403 746 1404 754 1378 775" fill="none" stroke="#ffffff" stroke-width="1.5" stroke-linecap="round"/><path d="M1431 908 C1421 893 1425 890 1420 888 C1423 875 1452 886 1445 870" fill="none" stroke="#dde1dd" stroke-width="2.8" stroke-linecap="round"/><path d="M1431 908 C1421 893 1425 890 1420 888 C1423 875 1452 886 1445 870" fill="none" stroke="#ffffff" stroke-width="1.7" stroke-linecap="round"/><path d="M1481 721 C1470 714 1446 725 1445 744 C1442 761 1455 769 1467 772" fill="none" stroke="#dde1dd" stroke-width="2.8" stroke-linecap="round"/><path d="M1481 721 C1470 714 1446 725 1445 744 C1442 761 1455 769 1467 772" fill="none" stroke="#ffffff" stroke-width="1.7" stroke-linecap="round"/><path d="M1482 876 C1479 869 1464 849 1470 842 C1459 829 1457 825 1452 809" fill="none" stroke="#dde1dd" stroke-width="2.4" stroke-linecap="round"/><path d="M1482 876 C1479 869 1464 849 1470 842 C1459 829 1457 825 1452 809" fill="none" stroke="#ffffff" stroke-width="1.3" stroke-linecap="round"/><path d="M1614 882 C1631 887 1652 888 1656 896 C1659 893 1650 892 1665 908" fill="none" stroke="#dde1dd" stroke-width="2.4" stroke-linecap="round"/><path d="M1614 882 C1631 887 1652 888 1656 896 C1659 893 1650 892 1665 908" fill="none" stroke="#ffffff" stroke-width="1.3" stroke-linecap="round"/><path d="M1467 860 C1486 850 1488 838 1488 847 C1510 862 1512 865 1514 859" fill="none" stroke="#dde1dd" stroke-width="2.7" stroke-linecap="round"/><path d="M1467 860 C1486 850 1488 838 1488 847 C1510 862 1512 865 1514 859" fill="none" stroke="#ffffff" stroke-width="1.6" stroke-linecap="round"/><path d="M1478 646 C1471 669 1480 662 1480 674 C1455 676 1457 681 1430 666" fill="none" stroke="#dde1dd" stroke-width="2.6" stroke-linecap="round"/><path d="M1478 646 C1471 669 1480 662 1480 674 C1455 676 1457 681 1430 666" fill="none" stroke="#ffffff" stroke-width="1.5" stroke-linecap="round"/><path d="M1396 607 C1408 605 1421 601 1415 611 C1413 618 1391 604 1396 595" fill="none" stroke="#dde1dd" stroke-width="2.7" stroke-linecap="round"/><path d="M1396 607 C1408 605 1421 601 1415 611 C1413 618 1391 604 1396 595" fill="none" stroke="#ffffff" stroke-width="1.6" stroke-linecap="round"/><path d="M1337 589 C1350 603 1339 603 1344 613 C1339 614 1349 646 1346 641" fill="none" stroke="#dde1dd" stroke-width="2.2" stroke-linecap="round"/><path d="M1337 589 C1350 603 1339 603 1344 613 C1339 614 1349 646 1346 641" fill="none" stroke="#ffffff" stroke-width="1.1" stroke-linecap="round"/><path d="M1266 610 C1259 603 1273 619 1272 617 C1265 622 1296 642 1291 633" fill="none" stroke="#dde1dd" stroke-width="2.4" stroke-linecap="round"/><path d="M1266 610 C1259 603 1273 619 1272 617 C1265 622 1296 642 1291 633" fill="none" stroke="#ffffff" stroke-width="1.3" stroke-linecap="round"/><path d="M1565 816 C1584 821 1595 791 1608 797 C1587 779 1590 768 1577 773" fill="none" stroke="#dde1dd" stroke-width="2.7" stroke-linecap="round"/><path d="M1565 816 C1584 821 1595 791 1608 797 C1587 779 1590 768 1577 773" fill="none" stroke="#ffffff" stroke-width="1.6" stroke-linecap="round"/><path d="M1524 883 C1546 901 1549 907 1554 897 C1529 880 1523 877 1514 870" fill="none" stroke="#dde1dd" stroke-width="2.6" stroke-linecap="round"/><path d="M1524 883 C1546 901 1549 907 1554 897 C1529 880 1523 877 1514 870" fill="none" stroke="#ffffff" stroke-width="1.5" stroke-linecap="round"/><path d="M1526 598 C1520 587 1522 596 1516 601 C1536 614 1517 608 1535 600" fill="none" stroke="#dde1dd" stroke-width="2.7" stroke-linecap="round"/><path d="M1526 598 C1520 587 1522 596 1516 601 C1536 614 1517 608 1535 600" fill="none" stroke="#ffffff" stroke-width="1.6" stroke-linecap="round"/><path d="M1363 610 C1370 620 1358 597 1361 600 C1370 607 1355 605 1361 614" fill="none" stroke="#dde1dd" stroke-width="2.8" stroke-linecap="round"/><path d="M1363 610 C1370 620 1358 597 1361 600 C1370 607 1355 605 1361 614" fill="none" stroke="#ffffff" stroke-width="1.7" stroke-linecap="round"/><path d="M1445 585 C1447 566 1432 560 1437 566 C1437 573 1448 578 1434 600" fill="none" stroke="#dde1dd" stroke-width="2.4" stroke-linecap="round"/><path d="M1445 585 C1447 566 1432 560 1437 566 C1437 573 1448 578 1434 600" fill="none" stroke="#ffffff" stroke-width="1.3" stroke-linecap="round"/><path d="M1551 567 C1544 557 1568 557 1578 557 C1570 562 1577 535 1579 526" fill="none" stroke="#dde1dd" stroke-width="2.2" stroke-linecap="round"/><path d="M1551 567 C1544 557 1568 557 1578 557 C1570 562 1577 535 1579 526" fill="none" stroke="#ffffff" stroke-width="1.1" stroke-linecap="round"/><path d="M1357 936 C1349 933 1378 935 1376 937 C1383 949 1368 942 1385 965" fill="none" stroke="#dde1dd" stroke-width="2.7" stroke-linecap="round"/><path d="M1357 936 C1349 933 1378 935 1376 937 C1383 949 1368 942 1385 965" fill="none" stroke="#ffffff" stroke-width="1.6" stroke-linecap="round"/><path d="M1406 905 C1412 929 1436 937 1438 934 C1426 954 1429 939 1403 954" fill="none" stroke="#dde1dd" stroke-width="2.4" stroke-linecap="round"/><path d="M1406 905 C1412 929 1436 937 1438 934 C1426 954 1429 939 1403 954" fill="none" stroke="#ffffff" stroke-width="1.3" stroke-linecap="round"/><path d="M1354 748 C1336 741 1338 743 1333 759 C1341 759 1310 789 1321 787" fill="none" stroke="#dde1dd" stroke-width="2.9" stroke-linecap="round"/><path d="M1354 748 C1336 741 1338 743 1333 759 C1341 759 1310 789 1321 787" fill="none" stroke="#ffffff" stroke-width="1.8" stroke-linecap="round"/><path d="M1474 618 C1479 613 1446 636 1447 647 C1436 661 1420 660 1424 665" fill="none" stroke="#dde1dd" stroke-width="2.9" stroke-linecap="round"/><path d="M1474 618 C1479 613 1446 636 1447 647 C1436 661 1420 660 1424 665" fill="none" stroke="#ffffff" stroke-width="1.8" stroke-linecap="round"/><path d="M1511 600 C1496 599 1483 610 1472 610 C1488 598 1506 604 1519 592" fill="none" stroke="#dde1dd" stroke-width="2.2" stroke-linecap="round"/><path d="M1511 600 C1496 599 1483 610 1472 610 C1488 598 1506 604 1519 592" fill="none" stroke="#ffffff" stroke-width="1.1" stroke-linecap="round"/><path d="M1431 840 C1413 845 1400 862 1381 859 C1354 855 1346 844 1337 859" fill="none" stroke="#dde1dd" stroke-width="2.3" stroke-linecap="round"/><path d="M1431 840 C1413 845 1400 862 1381 859 C1354 855 1346 844 1337 859" fill="none" stroke="#ffffff" stroke-width="1.2" stroke-linecap="round"/><path d="M1419 820 C1433 823 1462 827 1462 811 C1466 819 1483 799 1511 797" fill="none" stroke="#dde1dd" stroke-width="2.7" stroke-linecap="round"/><path d="M1419 820 C1433 823 1462 827 1462 811 C1466 819 1483 799 1511 797" fill="none" stroke="#ffffff" stroke-width="1.6" stroke-linecap="round"/><path d="M1448 716 C1462 722 1467 702 1490 702 C1481 702 1477 693 1490 707" fill="none" stroke="#dde1dd" stroke-width="2.4" stroke-linecap="round"/><path d="M1448 716 C1462 722 1467 702 1490 702 C1481 702 1477 693 1490 707" fill="none" stroke="#ffffff" stroke-width="1.3" stroke-linecap="round"/><path d="M1307 941 C1309 944 1284 940 1284 926 C1291 916 1286 932 1296 918" fill="none" stroke="#dde1dd" stroke-width="2.5" stroke-linecap="round"/><path d="M1307 941 C1309 944 1284 940 1284 926 C1291 916 1286 932 1296 918" fill="none" stroke="#ffffff" stroke-width="1.4" stroke-linecap="round"/><path d="M1583 634 C1579 626 1542 598 1546 602 C1567 589 1572 591 1579 602" fill="none" stroke="#dde1dd" stroke-width="2.7" stroke-linecap="round"/><path d="M1583 634 C1579 626 1542 598 1546 602 C1567 589 1572 591 1579 602" fill="none" stroke="#ffffff" stroke-width="1.6" stroke-linecap="round"/><path d="M1478 803 C1458 799 1464 813 1450 835 C1442 845 1427 820 1407 832" fill="none" stroke="#dde1dd" stroke-width="2.6" stroke-linecap="round"/><path d="M1478 803 C1458 799 1464 813 1450 835 C1442 845 1427 820 1407 832" fill="none" stroke="#ffffff" stroke-width="1.5" stroke-linecap="round"/><path d="M1563 612 C1565 592 1588 601 1588 595 C1590 586 1609 607 1629 593" fill="none" stroke="#dde1dd" stroke-width="2.3" stroke-linecap="round"/><path d="M1563 612 C1565 592 1588 601 1588 595 C1590 586 1609 607 1629 593" fill="none" stroke="#ffffff" stroke-width="1.2" stroke-linecap="round"/><path d="M1287 702 C1278 705 1248 688 1245 697 C1243 703 1257 696 1244 710" fill="none" stroke="#dde1dd" stroke-width="2.3" stroke-linecap="round"/><path d="M1287 702 C1278 705 1248 688 1245 697 C1243 703 1257 696 1244 710" fill="none" stroke="#ffffff" stroke-width="1.2" stroke-linecap="round"/><path d="M1435 774 C1452 772 1472 786 1475 777 C1462 765 1472 751 1455 750" fill="none" stroke="#dde1dd" stroke-width="2.6" stroke-linecap="round"/><path d="M1435 774 C1452 772 1472 786 1475 777 C1462 765 1472 751 1455 750" fill="none" stroke="#ffffff" stroke-width="1.5" stroke-linecap="round"/><path d="M1489 937 C1472 931 1466 961 1450 956 C1467 943 1460 941 1459 924" fill="none" stroke="#dde1dd" stroke-width="2.3" stroke-linecap="round"/><path d="M1489 937 C1472 931 1466 961 1450 956 C1467 943 1460 941 1459 924" fill="none" stroke="#ffffff" stroke-width="1.2" stroke-linecap="round"/><path d="M1404 693 C1398 681 1387 659 1364 663 C1371 665 1362 647 1344 640" fill="none" stroke="#dde1dd" stroke-width="2.2" stroke-linecap="round"/><path d="M1404 693 C1398 681 1387 659 1364 663 C1371 665 1362 647 1344 640" fill="none" stroke="#ffffff" stroke-width="1.1" stroke-linecap="round"/><path d="M1407 653 C1386 643 1374 669 1360 658 C1361 665 1379 657 1404 655" fill="none" stroke="#dde1dd" stroke-width="2.2" stroke-linecap="round"/><path d="M1407 653 C1386 643 1374 669 1360 658 C1361 665 1379 657 1404 655" fill="none" stroke="#ffffff" stroke-width="1.1" stroke-linecap="round"/><path d="M1615 776 C1615 786 1609 756 1609 760 C1606 773 1623 775 1611 789" fill="none" stroke="#dde1dd" stroke-width="2.7" stroke-linecap="round"/><path d="M1615 776 C1615 786 1609 756 1609 760 C1606 773 1623 775 1611 789" fill="none" stroke="#ffffff" stroke-width="1.6" stroke-linecap="round"/><path d="M1448 619 C1434 627 1429 643 1403 650 C1411 638 1403 647 1403 635" fill="none" stroke="#dde1dd" stroke-width="2.6" stroke-linecap="round"/><path d="M1448 619 C1434 627 1429 643 1403 650 C1411 638 1403 647 1403 635" fill="none" stroke="#ffffff" stroke-width="1.5" stroke-linecap="round"/><path d="M1304 644 C1298 664 1307 645 1323 660 C1315 669 1285 663 1282 656" fill="none" stroke="#dde1dd" stroke-width="2.2" stroke-linecap="round"/><path d="M1304 644 C1298 664 1307 645 1323 660 C1315 669 1285 663 1282 656" fill="none" stroke="#ffffff" stroke-width="1.1" stroke-linecap="round"/><path d="M1467 663 C1469 642 1465 636 1452 632 C1455 646 1471 632 1462 641" fill="none" stroke="#dde1dd" stroke-width="2.4" stroke-linecap="round"/><path d="M1467 663 C1469 642 1465 636 1452 632 C1455 646 1471 632 1462 641" fill="none" stroke="#ffffff" stroke-width="1.3" stroke-linecap="round"/><path d="M1575 617 C1587 604 1574 620 1567 611 C1587 595 1594 591 1590 576" fill="none" stroke="#dde1dd" stroke-width="2.4" stroke-linecap="round"/><path d="M1575 617 C1587 604 1574 620 1567 611 C1587 595 1594 591 1590 576" fill="none" stroke="#ffffff" stroke-width="1.3" stroke-linecap="round"/><path d="M1561 828 C1556 839 1553 848 1545 844 C1520 853 1529 854 1511 844" fill="none" stroke="#dde1dd" stroke-width="2.1" stroke-linecap="round"/><path d="M1561 828 C1556 839 1553 848 1545 844 C1520 853 1529 854 1511 844" fill="none" stroke="#ffffff" stroke-width="1.0" stroke-linecap="round"/><path d="M1450 751 C1453 756 1416 746 1412 730 C1421 720 1416 710 1427 722" fill="none" stroke="#dde1dd" stroke-width="2.6" stroke-linecap="round"/><path d="M1450 751 C1453 756 1416 746 1412 730 C1421 720 1416 710 1427 722" fill="none" stroke="#ffffff" stroke-width="1.5" stroke-linecap="round"/><path d="M1467 854 C1462 860 1464 854 1468 850 C1481 835 1478 857 1493 846" fill="none" stroke="#dde1dd" stroke-width="2.2" stroke-linecap="round"/><path d="M1467 854 C1462 860 1464 854 1468 850 C1481 835 1478 857 1493 846" fill="none" stroke="#ffffff" stroke-width="1.1" stroke-linecap="round"/><path d="M1276 571 C1282 561 1303 551 1302 543 C1312 541 1308 530 1305 510" fill="none" stroke="#dde1dd" stroke-width="2.6" stroke-linecap="round"/><path d="M1276 571 C1282 561 1303 551 1302 543 C1312 541 1308 530 1305 510" fill="none" stroke="#ffffff" stroke-width="1.5" stroke-linecap="round"/><path d="M1516 896 C1531 901 1516 860 1528 862 C1519 842 1508 828 1512 834" fill="none" stroke="#dde1dd" stroke-width="2.4" stroke-linecap="round"/><path d="M1516 896 C1531 901 1516 860 1528 862 C1519 842 1508 828 1512 834" fill="none" stroke="#ffffff" stroke-width="1.3" stroke-linecap="round"/><path d="M1365 848 C1375 853 1362 824 1353 825 C1348 810 1345 831 1344 822" fill="none" stroke="#dde1dd" stroke-width="2.7" stroke-linecap="round"/><path d="M1365 848 C1375 853 1362 824 1353 825 C1348 810 1345 831 1344 822" fill="none" stroke="#ffffff" stroke-width="1.6" stroke-linecap="round"/><path d="M1569 831 C1589 847 1585 854 1595 857 C1606 863 1597 870 1611 883" fill="none" stroke="#dde1dd" stroke-width="2.3" stroke-linecap="round"/><path d="M1569 831 C1589 847 1585 854 1595 857 C1606 863 1597 870 1611 883" fill="none" stroke="#ffffff" stroke-width="1.2" stroke-linecap="round"/><path d="M1504 864 C1505 861 1470 869 1473 867 C1463 844 1453 847 1459 842" fill="none" stroke="#dde1dd" stroke-width="2.2" stroke-linecap="round"/><path d="M1504 864 C1505 861 1470 869 1473 867 C1463 844 1453 847 1459 842" fill="none" stroke="#ffffff" stroke-width="1.1" stroke-linecap="round"/><path d="M1257 779 C1266 799 1277 785 1303 802 C1291 801 1268 790 1254 771" fill="none" stroke="#dde1dd" stroke-width="2.5" stroke-linecap="round"/><path d="M1257 779 C1266 799 1277 785 1303 802 C1291 801 1268 790 1254 771" fill="none" stroke="#ffffff" stroke-width="1.4" stroke-linecap="round"/><path d="M1590 802 C1589 793 1603 777 1594 778 C1575 786 1571 799 1573 801" fill="none" stroke="#dde1dd" stroke-width="2.6" stroke-linecap="round"/><path d="M1590 802 C1589 793 1603 777 1594 778 C1575 786 1571 799 1573 801" fill="none" stroke="#ffffff" stroke-width="1.5" stroke-linecap="round"/><path d="M1289 849 C1297 854 1277 846 1280 837 C1256 841 1266 842 1243 838" fill="none" stroke="#dde1dd" stroke-width="2.1" stroke-linecap="round"/><path d="M1289 849 C1297 854 1277 846 1280 837 C1256 841 1266 842 1243 838" fill="none" stroke="#ffffff" stroke-width="1.0" stroke-linecap="round"/></g>
<polygon points="1650.0,780.0 1807.0,760.0 1807.0,954.0 1640.0,954.0 1620.0,880.0" fill="#f4f6f4" />
<clipPath id="rhc2"><polygon points="1650.0,780.0 1807.0,760.0 1807.0,954.0 1640.0,954.0 1620.0,880.0"/></clipPath>
<g clip-path="url(#rhc2)"><path d="M1712 839 C1686 846 1699 844 1676 864 C1664 863 1686 869 1681 873" fill="none" stroke="#dde1dd" stroke-width="2.7" stroke-linecap="round"/><path d="M1712 839 C1686 846 1699 844 1676 864 C1664 863 1686 869 1681 873" fill="none" stroke="#ffffff" stroke-width="1.6" stroke-linecap="round"/><path d="M1658 814 C1659 817 1639 811 1619 814 C1620 811 1643 792 1644 786" fill="none" stroke="#dde1dd" stroke-width="2.2" stroke-linecap="round"/><path d="M1658 814 C1659 817 1639 811 1619 814 C1620 811 1643 792 1644 786" fill="none" stroke="#ffffff" stroke-width="1.1" stroke-linecap="round"/><path d="M1677 809 C1662 827 1673 810 1655 830 C1637 828 1659 818 1643 830" fill="none" stroke="#dde1dd" stroke-width="2.6" stroke-linecap="round"/><path d="M1677 809 C1662 827 1673 810 1655 830 C1637 828 1659 818 1643 830" fill="none" stroke="#ffffff" stroke-width="1.5" stroke-linecap="round"/><path d="M1651 876 C1649 858 1680 847 1691 856 C1691 853 1659 860 1649 855" fill="none" stroke="#dde1dd" stroke-width="2.2" stroke-linecap="round"/><path d="M1651 876 C1649 858 1680 847 1691 856 C1691 853 1659 860 1649 855" fill="none" stroke="#ffffff" stroke-width="1.1" stroke-linecap="round"/><path d="M1733 802 C1723 813 1743 814 1744 834 C1752 833 1733 872 1720 868" fill="none" stroke="#dde1dd" stroke-width="2.3" stroke-linecap="round"/><path d="M1733 802 C1723 813 1743 814 1744 834 C1752 833 1733 872 1720 868" fill="none" stroke="#ffffff" stroke-width="1.2" stroke-linecap="round"/><path d="M1738 778 C1737 790 1716 782 1725 790 C1734 789 1765 796 1761 796" fill="none" stroke="#dde1dd" stroke-width="2.1" stroke-linecap="round"/><path d="M1738 778 C1737 790 1716 782 1725 790 C1734 789 1765 796 1761 796" fill="none" stroke="#ffffff" stroke-width="1.0" stroke-linecap="round"/><path d="M1771 830 C1768 819 1755 820 1765 810 C1739 825 1746 824 1725 830" fill="none" stroke="#dde1dd" stroke-width="2.7" stroke-linecap="round"/><path d="M1771 830 C1768 819 1755 820 1765 810 C1739 825 1746 824 1725 830" fill="none" stroke="#ffffff" stroke-width="1.6" stroke-linecap="round"/><path d="M1674 906 C1686 897 1665 903 1666 887 C1653 901 1650 882 1653 899" fill="none" stroke="#dde1dd" stroke-width="2.9" stroke-linecap="round"/><path d="M1674 906 C1686 897 1665 903 1666 887 C1653 901 1650 882 1653 899" fill="none" stroke="#ffffff" stroke-width="1.8" stroke-linecap="round"/><path d="M1661 944 C1661 933 1686 946 1709 952 C1708 951 1719 964 1720 984" fill="none" stroke="#dde1dd" stroke-width="2.2" stroke-linecap="round"/><path d="M1661 944 C1661 933 1686 946 1709 952 C1708 951 1719 964 1720 984" fill="none" stroke="#ffffff" stroke-width="1.1" stroke-linecap="round"/><path d="M1728 898 C1721 905 1694 907 1685 895 C1683 911 1662 893 1652 910" fill="none" stroke="#dde1dd" stroke-width="2.1" stroke-linecap="round"/><path d="M1728 898 C1721 905 1694 907 1685 895 C1683 911 1662 893 1652 910" fill="none" stroke="#ffffff" stroke-width="1.0" stroke-linecap="round"/><path d="M1724 802 C1736 785 1718 772 1737 773 C1732 764 1733 789 1732 777" fill="none" stroke="#dde1dd" stroke-width="2.5" stroke-linecap="round"/><path d="M1724 802 C1736 785 1718 772 1737 773 C1732 764 1733 789 1732 777" fill="none" stroke="#ffffff" stroke-width="1.4" stroke-linecap="round"/><path d="M1797 775 C1813 784 1832 807 1846 803 C1834 800 1822 816 1802 813" fill="none" stroke="#dde1dd" stroke-width="2.2" stroke-linecap="round"/><path d="M1797 775 C1813 784 1832 807 1846 803 C1834 800 1822 816 1802 813" fill="none" stroke="#ffffff" stroke-width="1.1" stroke-linecap="round"/><path d="M1754 853 C1740 859 1749 872 1753 863 C1752 874 1745 865 1726 886" fill="none" stroke="#dde1dd" stroke-width="2.6" stroke-linecap="round"/><path d="M1754 853 C1740 859 1749 872 1753 863 C1752 874 1745 865 1726 886" fill="none" stroke="#ffffff" stroke-width="1.5" stroke-linecap="round"/><path d="M1739 895 C1726 889 1722 861 1729 865 C1726 850 1727 858 1715 863" fill="none" stroke="#dde1dd" stroke-width="2.7" stroke-linecap="round"/><path d="M1739 895 C1726 889 1722 861 1729 865 C1726 850 1727 858 1715 863" fill="none" stroke="#ffffff" stroke-width="1.6" stroke-linecap="round"/><path d="M1632 946 C1649 966 1626 964 1641 979 C1623 976 1610 981 1614 998" fill="none" stroke="#dde1dd" stroke-width="2.9" stroke-linecap="round"/><path d="M1632 946 C1649 966 1626 964 1641 979 C1623 976 1610 981 1614 998" fill="none" stroke="#ffffff" stroke-width="1.8" stroke-linecap="round"/><path d="M1803 839 C1811 834 1824 829 1827 836 C1811 835 1823 823 1803 838" fill="none" stroke="#dde1dd" stroke-width="2.2" stroke-linecap="round"/><path d="M1803 839 C1811 834 1824 829 1827 836 C1811 835 1823 823 1803 838" fill="none" stroke="#ffffff" stroke-width="1.1" stroke-linecap="round"/><path d="M1772 781 C1767 780 1741 791 1747 805 C1755 820 1745 833 1727 826" fill="none" stroke="#dde1dd" stroke-width="2.8" stroke-linecap="round"/><path d="M1772 781 C1767 780 1741 791 1747 805 C1755 820 1745 833 1727 826" fill="none" stroke="#ffffff" stroke-width="1.7" stroke-linecap="round"/><path d="M1793 948 C1773 947 1764 935 1752 935 C1754 926 1775 934 1786 928" fill="none" stroke="#dde1dd" stroke-width="2.6" stroke-linecap="round"/><path d="M1793 948 C1773 947 1764 935 1752 935 C1754 926 1775 934 1786 928" fill="none" stroke="#ffffff" stroke-width="1.5" stroke-linecap="round"/><path d="M1708 804 C1695 802 1692 802 1698 792 C1707 780 1708 777 1714 767" fill="none" stroke="#dde1dd" stroke-width="2.7" stroke-linecap="round"/><path d="M1708 804 C1695 802 1692 802 1698 792 C1707 780 1708 777 1714 767" fill="none" stroke="#ffffff" stroke-width="1.6" stroke-linecap="round"/><path d="M1786 905 C1773 891 1768 906 1758 908 C1779 905 1771 906 1794 896" fill="none" stroke="#dde1dd" stroke-width="2.3" stroke-linecap="round"/><path d="M1786 905 C1773 891 1768 906 1758 908 C1779 905 1771 906 1794 896" fill="none" stroke="#ffffff" stroke-width="1.2" stroke-linecap="round"/><path d="M1724 783 C1696 781 1680 792 1676 813 C1690 820 1710 837 1708 847" fill="none" stroke="#dde1dd" stroke-width="2.2" stroke-linecap="round"/><path d="M1724 783 C1696 781 1680 792 1676 813 C1690 820 1710 837 1708 847" fill="none" stroke="#ffffff" stroke-width="1.1" stroke-linecap="round"/><path d="M1752 836 C1742 823 1739 838 1729 823 C1737 799 1733 810 1736 789" fill="none" stroke="#dde1dd" stroke-width="2.6" stroke-linecap="round"/><path d="M1752 836 C1742 823 1739 838 1729 823 C1737 799 1733 810 1736 789" fill="none" stroke="#ffffff" stroke-width="1.5" stroke-linecap="round"/><path d="M1791 909 C1782 907 1767 886 1768 884 C1779 882 1798 862 1793 873" fill="none" stroke="#dde1dd" stroke-width="2.2" stroke-linecap="round"/><path d="M1791 909 C1782 907 1767 886 1768 884 C1779 882 1798 862 1793 873" fill="none" stroke="#ffffff" stroke-width="1.1" stroke-linecap="round"/><path d="M1768 893 C1747 887 1752 867 1727 868 C1716 882 1722 890 1698 881" fill="none" stroke="#dde1dd" stroke-width="2.7" stroke-linecap="round"/><path d="M1768 893 C1747 887 1752 867 1727 868 C1716 882 1722 890 1698 881" fill="none" stroke="#ffffff" stroke-width="1.6" stroke-linecap="round"/><path d="M1718 781 C1726 783 1753 778 1749 774 C1749 779 1790 805 1790 807" fill="none" stroke="#dde1dd" stroke-width="2.9" stroke-linecap="round"/><path d="M1718 781 C1726 783 1753 778 1749 774 C1749 779 1790 805 1790 807" fill="none" stroke="#ffffff" stroke-width="1.8" stroke-linecap="round"/><path d="M1663 868 C1681 883 1683 856 1706 871 C1708 882 1725 863 1742 876" fill="none" stroke="#dde1dd" stroke-width="2.3" stroke-linecap="round"/><path d="M1663 868 C1681 883 1683 856 1706 871 C1708 882 1725 863 1742 876" fill="none" stroke="#ffffff" stroke-width="1.2" stroke-linecap="round"/><path d="M1636 845 C1659 830 1646 832 1664 841 C1672 836 1672 837 1672 820" fill="none" stroke="#dde1dd" stroke-width="2.7" stroke-linecap="round"/><path d="M1636 845 C1659 830 1646 832 1664 841 C1672 836 1672 837 1672 820" fill="none" stroke="#ffffff" stroke-width="1.6" stroke-linecap="round"/><path d="M1793 798 C1787 801 1784 811 1781 830 C1779 847 1806 829 1816 840" fill="none" stroke="#dde1dd" stroke-width="2.6" stroke-linecap="round"/><path d="M1793 798 C1787 801 1784 811 1781 830 C1779 847 1806 829 1816 840" fill="none" stroke="#ffffff" stroke-width="1.5" stroke-linecap="round"/><path d="M1798 834 C1770 828 1758 830 1749 813 C1740 791 1723 781 1720 779" fill="none" stroke="#dde1dd" stroke-width="2.2" stroke-linecap="round"/><path d="M1798 834 C1770 828 1758 830 1749 813 C1740 791 1723 781 1720 779" fill="none" stroke="#ffffff" stroke-width="1.1" stroke-linecap="round"/><path d="M1743 942 C1733 958 1735 935 1730 952 C1723 931 1757 944 1754 932" fill="none" stroke="#dde1dd" stroke-width="2.4" stroke-linecap="round"/><path d="M1743 942 C1733 958 1735 935 1730 952 C1723 931 1757 944 1754 932" fill="none" stroke="#ffffff" stroke-width="1.3" stroke-linecap="round"/></g>
<polyline points="1252.0,332.0 1420.0,312.0 1600.0,287.0 1807.0,258.0" fill="none" stroke="#fdfdfc" stroke-width="3.6" stroke-linejoin="round" stroke-linecap="round" />
<polyline points="1400.0,100.0 1600.0,70.0 1807.0,40.0" fill="none" stroke="#fdfdfc" stroke-width="3.2" stroke-linejoin="round" stroke-linecap="round" />
<polyline points="1685.0,12.0 1700.0,200.0 1718.0,421.0" fill="none" stroke="#fdfdfc" stroke-width="3.8" stroke-linejoin="round" stroke-linecap="round" />
<polyline points="1300.0,760.0 1447.0,618.0 1714.0,421.0 1807.0,350.0" fill="none" stroke="#fdfdfc" stroke-width="4.0" stroke-linejoin="round" stroke-linecap="round" />
<polyline points="1252.0,445.0 1420.0,425.0 1600.0,400.0 1807.0,370.0" fill="none" stroke="#fdfdfc" stroke-width="2.6" stroke-linejoin="round" stroke-linecap="round" />
<polyline points="1718.0,421.0 1740.0,700.0 1755.0,954.0" fill="none" stroke="#fdfdfc" stroke-width="3.2" stroke-linejoin="round" stroke-linecap="round" />
<polyline points="1252.0,820.0 1330.0,800.0 1420.0,790.0 1470.0,770.0 1520.0,730.0" fill="none" stroke="#fdfdfc" stroke-width="3.4" stroke-linejoin="round" stroke-linecap="round" />
<polyline points="1640.0,954.0 1680.0,880.0 1720.0,820.0 1760.0,760.0" fill="none" stroke="#fdfdfc" stroke-width="3.0" stroke-linejoin="round" stroke-linecap="round" />
<polyline points="1110.0,797.0 1116.0,954.0" fill="none" stroke="#fdfdfc" stroke-width="3.4" stroke-linejoin="round" stroke-linecap="round" />
<polyline points="1500.0,12.0 1520.0,200.0 1540.0,440.0" fill="none" stroke="#fdfdfc" stroke-width="2.6" stroke-linejoin="round" stroke-linecap="round" />
<polyline points="1720.0,12.0 1807.0,90.0" fill="none" stroke="#fdfdfc" stroke-width="2.8" stroke-linejoin="round" stroke-linecap="round" />
<polyline points="1252.0,600.0 1400.0,585.0 1560.0,560.0 1807.0,530.0" fill="none" stroke="#fdfdfc" stroke-width="2.6" stroke-linejoin="round" stroke-linecap="round" />
<polyline points="1600.0,12.0 1615.0,300.0 1625.0,600.0 1640.0,954.0" fill="none" stroke="#fdfdfc" stroke-width="2.4" stroke-linejoin="round" stroke-linecap="round" />
<path d="M1447 618 C1460 660 1470 720 1440 780 C1420 820 1380 850 1330 880" fill="none" stroke="#fdfdfc" stroke-width="3.0" stroke-linecap="round"/>
<path d="M1252 700 C1300 690 1330 720 1350 760" fill="none" stroke="#fdfdfc" stroke-width="2.2" stroke-linecap="round"/>
<text x="1240" y="52" text-anchor="middle" dominant-baseline="central" style="font-size:10px;fill:#83878c;letter-spacing:0.4px;" transform="rotate(-14 1240 52)" >Presidio Parkway</text>
<text x="1522" y="85" text-anchor="middle" dominant-baseline="central" style="font-size:10px;fill:#83878c;letter-spacing:0.4px;" transform="rotate(-9 1522 85)" >Lombard Street</text>
<text x="1628" y="66" text-anchor="middle" dominant-baseline="central" style="font-size:10px;fill:#83878c;letter-spacing:0.4px;" transform="rotate(-8 1628 66)" >Lombard Street</text>
<text x="1722" y="14" text-anchor="middle" dominant-baseline="central" style="font-size:10px;fill:#83878c;letter-spacing:0.4px;" transform="rotate(-7 1722 14)" >Bay Stre</text>
<text x="1677" y="152" text-anchor="middle" dominant-baseline="central" style="font-size:10px;fill:#83878c;letter-spacing:0.4px;" transform="rotate(79 1677 152)" >Van Ness Avenue</text>
<text x="1744" y="127" text-anchor="middle" dominant-baseline="central" style="font-size:10px;fill:#83878c;letter-spacing:0.4px;" transform="rotate(-8 1744 127)" >Broadway</text>
<text x="1451" y="311" text-anchor="middle" dominant-baseline="central" style="font-size:10px;fill:#83878c;letter-spacing:0.4px;" transform="rotate(-8 1451 311)" >Geary Boulevard</text>
<text x="1478" y="438" text-anchor="middle" dominant-baseline="central" style="font-size:10px;fill:#83878c;letter-spacing:0.4px;" transform="rotate(-8 1478 438)" >Fell Street</text>
<text x="1481" y="451" text-anchor="middle" dominant-baseline="central" style="font-size:10px;fill:#83878c;letter-spacing:0.4px;" transform="rotate(-8 1481 451)" >Oak Street</text>
<text x="1622" y="412" text-anchor="middle" dominant-baseline="central" style="font-size:10px;fill:#83878c;letter-spacing:0.4px;" transform="rotate(-8 1622 412)" >Fell Street</text>
<text x="1624" y="425" text-anchor="middle" dominant-baseline="central" style="font-size:10px;fill:#83878c;letter-spacing:0.4px;" transform="rotate(-8 1624 425)" >Oak Street</text>
<text x="1718" y="360" text-anchor="middle" dominant-baseline="central" style="font-size:16.2px;fill:#6f7377;letter-spacing:1.1px;font-weight:bold;" >SAN FRANCISCO</text>
<text x="1344" y="496" text-anchor="middle" dominant-baseline="central" style="font-size:9px;fill:#83878c;letter-spacing:0px;font-style:italic;" >Alvord Lake</text>
<text x="1470" y="610" text-anchor="middle" dominant-baseline="central" style="font-size:10px;fill:#83878c;letter-spacing:0.4px;" transform="rotate(-38 1470 610)" >Market Street</text>
<text x="1620" y="520" text-anchor="middle" dominant-baseline="central" style="font-size:10px;fill:#83878c;letter-spacing:0.4px;" transform="rotate(-40 1620 520)" >Market Street</text>
<text x="1407" y="664" text-anchor="middle" dominant-baseline="central" style="font-size:9px;fill:#83878c;letter-spacing:0px;font-style:italic;" >Twin Peaks</text>
<text x="1407" y="674" text-anchor="middle" dominant-baseline="central" style="font-size:9px;fill:#83878c;letter-spacing:0px;font-style:italic;" >Reservoir</text>
<text x="1272" y="715" text-anchor="middle" dominant-baseline="central" style="font-size:9px;fill:#83878c;letter-spacing:0px;font-style:italic;" >Laguna Honda</text>
<text x="1419" y="797" text-anchor="middle" dominant-baseline="central" style="font-size:10px;fill:#83878c;letter-spacing:0.4px;" transform="rotate(-15 1419 797)" >Portola Drive</text>
<text x="1275" y="884" text-anchor="middle" dominant-baseline="central" style="font-size:10px;fill:#83878c;letter-spacing:0.4px;" transform="rotate(-12 1275 884)" >Portola Drive</text>
<text x="1660" y="905" text-anchor="middle" dominant-baseline="central" style="font-size:10px;fill:#83878c;letter-spacing:0.4px;" transform="rotate(-62 1660 905)" >San Jose Avenue</text>
<text x="1741" y="602" text-anchor="middle" dominant-baseline="central" style="font-size:10px;fill:#83878c;letter-spacing:0.4px;" transform="rotate(80 1741 602)" >South Van Ness Avenue</text>
<text x="978" y="939" text-anchor="middle" dominant-baseline="central" style="font-size:9px;fill:#83878c;letter-spacing:0px;font-style:italic;" >Pine Lake</text>
<text x="1116" y="825" text-anchor="middle" dominant-baseline="central" style="font-size:10px;fill:#83878c;letter-spacing:0.4px;" transform="rotate(86 1116 825)" >19th Avenue</text>
<text x="1270" y="470" text-anchor="middle" dominant-baseline="central" style="font-size:9px;fill:#83878c;letter-spacing:0px;font-style:italic;" >ly Pond</text>
<ellipse cx="1733" cy="401" rx="9" ry="8" fill="rgba(0,0,0,.22)"/>
<path d="M1708 398 L1717 416.5 L1726 398 Z" fill="#2a5d9c"/>
<circle cx="1717" cy="383" r="18.2" fill="#f4f4f4" stroke="#3676c4" stroke-width="4.8"/>
<g transform="translate(1708.5,377) scale(0.75)"><path fill="#3676c4" d="M2 2h18c1.2 0 2 .8 2 2v8c0 .6-.4 1-1 1h-1.3a2.2 2.2 0 0 0-4.3 0H8.6a2.2 2.2 0 0 0-4.3 0H2c-.6 0-1-.4-1-1V3c0-.6.4-1 1-1zm1 2v3h3V4H3zm4.5 0v3h3V4h-3zm4.5 0v3h3V4h-3zm4.5 0v3H20V4h-3.5zM6.5 12a1.5 1.5 0 1 1 0 3 1.5 1.5 0 0 1 0-3zm11.2 0a1.5 1.5 0 1 1 0 3 1.5 1.5 0 0 1 0-3z"/></g>
<rect x="1675" y="304" width="85" height="56" rx="6" fill="rgba(255,255,255,.95)" stroke="#4284d0" stroke-width="1.6"/>
<text x="1717" y="319" text-anchor="middle" dominant-baseline="central" style="font-size:14px;fill:#4182d0;letter-spacing:0px;font-weight:bold;" >Bus D</text>
<text x="1717" y="337" text-anchor="middle" dominant-baseline="central" style="font-size:9.2px;fill:#4182d0;letter-spacing:-0.15px;font-weight:bold;" >Status: Refueling</text>
<text x="1717" y="350" text-anchor="middle" dominant-baseline="central" style="font-size:9.2px;fill:#4182d0;letter-spacing:-0.15px;font-weight:bold;" >Speed: 0 MPH</text>
</g></svg>
<div style="position:absolute;left:17px;top:17px;width:29px;height:57px;background:#fff;border:1.5px solid rgba(0,0,0,.55);border-radius:14px;box-shadow:0 1px 5px rgba(0,0,0,.4)"></div>
<div class="a" style="left:25px;top:33px;width:13px;height:1.5px;background:#444"></div><div class="a" style="left:30.75px;top:27.25px;width:1.5px;height:13px;background:#444"></div><div class="a" style="left:25px;top:60px;width:13px;height:2px;background:#444"></div>
<svg class="i" style="left:872px;top:13px" width="19" height="19" viewBox="0 0 24 24"><path fill="#111" d="M7 14H5v5h5v-2H7v-3zm-2-4h2V7h3V5H5v5zm12 7h-3v2h5v-5h-2v3zM14 5v2h3v3h2V5h-5z"/></svg>
<div class="a" style="right:9px;bottom:7px;height:13px;padding:0 5px 0 4px;background:rgba(255,255,255,.8);font-size:9.3px;line-height:13px;color:#333;letter-spacing:-.05px"><span style="display:inline-block;width:10px;height:7px;background:linear-gradient(#4c7be1 50%,#ffd500 50%);margin-right:2px"></span><span style="color:#0078a8">Leaflet</span> | © <span style="color:#0078a8">OpenStreetMap</span> contributors © <span style="color:#0078a8">CARTO</span></div>
<div class="a" style="left:260px;top:298px;width:108px;height:167px;background:#fff;border-radius:12px;box-shadow:0 3px 14px rgba(0,0,0,.4)"></div>
<svg class="i" style="left:350px;top:302px" width="14" height="14" viewBox="0 0 24 24"><path fill="#555" d="M19 6.41L17.59 5 12 10.59 6.41 5 5 6.41 10.59 12 5 17.59 6.41 19 12 13.41 17.59 19 19 17.59 13.41 12z"/></svg>
<div class="a" style="left:334px;top:325px;font-size:13px;line-height:16px;color:#333">30</div>
</div>

<div class="ov"></div>

<!-- ============ Modal ============ -->
<div class="modal">
  <div class="a" style="left:0;top:0;width:914px;height:58px;background:#006b5e"></div>
  <div class="a" style="left:14px;top:17px;font-size:18.8px;color:#fff;letter-spacing:.1px;line-height:22px;-webkit-text-stroke:.45px #fff">Bus A: route history</div>
  <svg class="i" style="left:873px;top:17px" width="24" height="24" viewBox="0 0 24 24"><path fill="#fff" d="M19 6.41L17.59 5 12 10.59 6.41 5 5 6.41 10.59 12 5 17.59 6.41 19 12 13.41 17.59 19 19 17.59 13.41 12z"/></svg>
  <div class="a" style="left:14px;top:77px;font-size:11px;color:rgba(0,0,0,.38);letter-spacing:-.1px;line-height:14px">History - last day</div>
  <div class="a" style="left:14px;top:98px;width:885px;height:478px;overflow:hidden;background:#f2f2f0">
    <svg width="885" height="478" style="position:absolute;left:0;top:0;font-family:'Liberation Sans',sans-serif">
<defs>
<pattern id="pr" patternUnits="userSpaceOnUse" width="11.6" height="25.5" patternTransform="translate(0,0) rotate(-2.2)"><rect width="11.6" height="25.5" fill="#ffffff"/><rect x="1.35" y="1.35" width="8.9" height="22.8" fill="#f8f8f8" stroke="#dedede" stroke-width="0.7"/></pattern>
<pattern id="ps" patternUnits="userSpaceOnUse" width="12.0" height="24.0" patternTransform="translate(3,5) rotate(-1.2)"><rect width="12.0" height="24.0" fill="#ffffff"/><rect x="1.35" y="1.35" width="9.3" height="21.3" fill="#f8f8f8" stroke="#dedede" stroke-width="0.7"/></pattern>
<pattern id="pe" patternUnits="userSpaceOnUse" width="21.0" height="18.0" patternTransform="translate(1,2) rotate(-4)"><rect width="21.0" height="18.0" fill="#ffffff"/><rect x="1.5499999999999998" y="1.5499999999999998" width="17.900000000000002" height="14.9" fill="#f8f8f8" stroke="#dedede" stroke-width="0.7"/></pattern>
<pattern id="ph" patternUnits="userSpaceOnUse" width="15.0" height="13.0" patternTransform="translate(1,2) rotate(8)"><rect width="15.0" height="13.0" fill="#ffffff"/><rect x="1.35" y="1.35" width="12.3" height="10.3" fill="#f8f8f8" stroke="#dedede" stroke-width="0.7"/></pattern>
</defs>
<g transform="translate(-352,-164)">
<rect x="352" y="164" width="885" height="478" fill="#f8f8f7"/>
<polygon points="470.0,250.0 640.0,244.0 668.0,230.0 668.0,164.0 1237.0,164.0 1237.0,330.0 1087.0,330.0 978.0,348.0 487.0,377.0 480.0,300.0" fill="url(#pr)" />
<polygon points="520.0,164.0 668.0,164.0 668.0,230.0 640.0,244.0 600.0,248.0 520.0,252.0 470.0,262.0 449.0,262.0 452.0,240.0 470.0,210.0 500.0,196.0" fill="#ebefeb" />
<path d="M590 164 C610 190 640 200 668 196" fill="none" stroke="#fdfdfc" stroke-width="2.0" stroke-linecap="round"/>
<path d="M668 220 C640 236 600 240 560 244 C520 250 500 262 490 290" fill="none" stroke="#fdfdfc" stroke-width="2.0" stroke-linecap="round"/>
<path d="M548 180 C520 200 505 220 498 250" fill="none" stroke="#fdfdfc" stroke-width="1.4" stroke-linecap="round"/>
<polygon points="520.0,216.0 572.0,214.0 572.0,244.0 520.0,246.0" fill="#f4f4f2" />
<polygon points="1000.0,164.0 1237.0,164.0 1237.0,480.0 1110.0,480.0 1104.0,443.0 1087.0,330.0 1000.0,340.0" fill="url(#pe)" />
<polygon points="470.0,378.0 978.0,348.0 1087.0,330.0 1104.0,443.0 1060.0,451.0 1000.0,452.0 830.0,458.0 700.0,465.0 494.0,476.0 482.0,420.0" fill="#ebefeb" />
<path d="M492 398 C530 420 560 430 600 410 C640 390 700 385 760 380" fill="none" stroke="#fdfdfc" stroke-width="1.8" stroke-linecap="round"/>
<path d="M520 380 C560 400 600 420 640 430 C700 445 760 440 840 432 C900 420 960 430 1030 420" fill="none" stroke="#fdfdfc" stroke-width="1.8" stroke-linecap="round"/>
<path d="M620 380 C640 400 650 430 640 460" fill="none" stroke="#fdfdfc" stroke-width="1.6" stroke-linecap="round"/>
<path d="M830 370 C838 400 845 430 850 458" fill="none" stroke="#fdfdfc" stroke-width="2.4" stroke-linecap="round"/>
<path d="M760 430 C800 440 860 440 900 435" fill="none" stroke="#fdfdfc" stroke-width="1.5" stroke-linecap="round"/>
<path d="M930 440 C960 420 1000 400 1040 380" fill="none" stroke="#fdfdfc" stroke-width="1.5" stroke-linecap="round"/>
<path d="M1050 340 C1060 380 1070 410 1085 440" fill="none" stroke="#fdfdfc" stroke-width="1.5" stroke-linecap="round"/>
<path d="M880 395 C900 405 920 410 960 400" fill="none" stroke="#fdfdfc" stroke-width="1.4" stroke-linecap="round"/>
<path d="M700 400 C740 395 790 400 820 395" fill="none" stroke="#fdfdfc" stroke-width="1.3" stroke-linecap="round"/>
<path d="M845 396 C852 386 872 392 890 397 C905 400 908 420 898 430 C885 434 862 432 852 424 C844 416 842 404 845 396 Z" fill="#dce1e2" stroke="#d3d9da" stroke-width="1"/>
<path d="M854 402 C862 396 880 400 888 404 C896 410 894 420 886 424 C874 426 862 424 856 418 C851 412 851 406 854 402 Z" fill="#e6ebe6"/>
<ellipse cx="612" cy="386" rx="9" ry="4" fill="#d6dcdd"/>
<ellipse cx="578" cy="403" rx="5" ry="7" fill="#d9dfe0"/>
<rect x="641" y="428" width="18" height="7" fill="#d8dcdc"/>
<ellipse cx="715" cy="434" rx="7" ry="3" fill="#dfe5df"/>
<ellipse cx="790" cy="430" rx="6" ry="3" fill="#dfe5df"/>
<ellipse cx="1050" cy="445" rx="9" ry="4" fill="#e0e6e0"/>
<polygon points="1104.0,330.0 1237.0,320.0 1237.0,350.0 1106.0,360.0" fill="url(#pe)" />
<polygon points="500.0,476.0 700.0,465.0 830.0,458.0 1000.0,452.0 1110.0,447.0 1112.0,472.0 992.0,500.0 992.0,642.0 505.0,642.0 498.0,560.0" fill="url(#ps)" />
<polygon points="992.0,500.0 1110.0,472.0 1237.0,500.0 1237.0,642.0 992.0,642.0" fill="#f4f6f4" />
<polygon points="1020.0,515.0 1060.0,505.0 1100.0,520.0 1110.0,560.0 1090.0,600.0 1050.0,610.0 1025.0,580.0" fill="#ebefeb" />
<polygon points="1110.0,440.0 1237.0,430.0 1237.0,505.0 1180.0,540.0 1112.0,520.0" fill="url(#ph)" />
<clipPath id="hc"><polygon points="992.0,500.0 1110.0,472.0 1237.0,500.0 1237.0,642.0 992.0,642.0"/></clipPath>
<g clip-path="url(#hc)"><path d="M1053 580 C1052 569 1029 595 1040 587 C1047 580 1033 573 1016 568" fill="none" stroke="#dde1dd" stroke-width="2.6" stroke-linecap="round"/><path d="M1053 580 C1052 569 1029 595 1040 587 C1047 580 1033 573 1016 568" fill="none" stroke="#ffffff" stroke-width="1.5" stroke-linecap="round"/><path d="M1031 592 C1050 598 1044 601 1068 594 C1057 600 1074 590 1077 580" fill="none" stroke="#dde1dd" stroke-width="2.8" stroke-linecap="round"/><path d="M1031 592 C1050 598 1044 601 1068 594 C1057 600 1074 590 1077 580" fill="none" stroke="#ffffff" stroke-width="1.7" stroke-linecap="round"/><path d="M1168 631 C1163 651 1172 634 1157 652 C1160 644 1136 632 1121 632" fill="none" stroke="#dde1dd" stroke-width="2.5" stroke-linecap="round"/><path d="M1168 631 C1163 651 1172 634 1157 652 C1160 644 1136 632 1121 632" fill="none" stroke="#ffffff" stroke-width="1.4" stroke-linecap="round"/><path d="M1088 553 C1103 560 1107 568 1097 559 C1102 573 1145 580 1146 571" fill="none" stroke="#dde1dd" stroke-width="2.6" stroke-linecap="round"/><path d="M1088 553 C1103 560 1107 568 1097 559 C1102 573 1145 580 1146 571" fill="none" stroke="#ffffff" stroke-width="1.5" stroke-linecap="round"/><path d="M1168 534 C1171 522 1202 552 1201 539 C1186 535 1166 562 1160 560" fill="none" stroke="#dde1dd" stroke-width="2.8" stroke-linecap="round"/><path d="M1168 534 C1171 522 1202 552 1201 539 C1186 535 1166 562 1160 560" fill="none" stroke="#ffffff" stroke-width="1.7" stroke-linecap="round"/><path d="M1006 589 C987 605 988 600 960 604 C962 603 981 586 1010 591" fill="none" stroke="#dde1dd" stroke-width="2.4" stroke-linecap="round"/><path d="M1006 589 C987 605 988 600 960 604 C962 603 981 586 1010 591" fill="none" stroke="#ffffff" stroke-width="1.3" stroke-linecap="round"/><path d="M1143 526 C1123 548 1123 541 1097 552 C1100 555 1096 557 1093 554" fill="none" stroke="#dde1dd" stroke-width="2.9" stroke-linecap="round"/><path d="M1143 526 C1123 548 1123 541 1097 552 C1100 555 1096 557 1093 554" fill="none" stroke="#ffffff" stroke-width="1.8" stroke-linecap="round"/><path d="M1118 564 C1118 573 1134 553 1140 546 C1127 530 1109 546 1091 540" fill="none" stroke="#dde1dd" stroke-width="2.1" stroke-linecap="round"/><path d="M1118 564 C1118 573 1134 553 1140 546 C1127 530 1109 546 1091 540" fill="none" stroke="#ffffff" stroke-width="1.0" stroke-linecap="round"/><path d="M1147 569 C1158 573 1145 548 1165 559 C1163 567 1180 576 1182 591" fill="none" stroke="#dde1dd" stroke-width="2.4" stroke-linecap="round"/><path d="M1147 569 C1158 573 1145 548 1165 559 C1163 567 1180 576 1182 591" fill="none" stroke="#ffffff" stroke-width="1.3" stroke-linecap="round"/><path d="M1071 556 C1070 560 1063 548 1080 542 C1079 547 1089 523 1104 528" fill="none" stroke="#dde1dd" stroke-width="2.4" stroke-linecap="round"/><path d="M1071 556 C1070 560 1063 548 1080 542 C1079 547 1089 523 1104 528" fill="none" stroke="#ffffff" stroke-width="1.3" stroke-linecap="round"/><path d="M1164 519 C1169 514 1162 501 1146 507 C1153 509 1126 503 1130 518" fill="none" stroke="#dde1dd" stroke-width="2.5" stroke-linecap="round"/><path d="M1164 519 C1169 514 1162 501 1146 507 C1153 509 1126 503 1130 518" fill="none" stroke="#ffffff" stroke-width="1.4" stroke-linecap="round"/><path d="M1041 616 C1045 618 1069 609 1075 593 C1064 594 1057 571 1060 567" fill="none" stroke="#dde1dd" stroke-width="2.4" stroke-linecap="round"/><path d="M1041 616 C1045 618 1069 609 1075 593 C1064 594 1057 571 1060 567" fill="none" stroke="#ffffff" stroke-width="1.3" stroke-linecap="round"/><path d="M1097 561 C1094 567 1137 559 1139 537 C1149 538 1141 569 1132 569" fill="none" stroke="#dde1dd" stroke-width="2.6" stroke-linecap="round"/><path d="M1097 561 C1094 567 1137 559 1139 537 C1149 538 1141 569 1132 569" fill="none" stroke="#ffffff" stroke-width="1.5" stroke-linecap="round"/><path d="M1121 545 C1103 542 1103 541 1105 526 C1097 547 1085 557 1059 554" fill="none" stroke="#dde1dd" stroke-width="2.6" stroke-linecap="round"/><path d="M1121 545 C1103 542 1103 541 1105 526 C1097 547 1085 557 1059 554" fill="none" stroke="#ffffff" stroke-width="1.5" stroke-linecap="round"/><path d="M998 607 C993 604 973 610 965 593 C961 601 973 594 977 582" fill="none" stroke="#dde1dd" stroke-width="2.4" stroke-linecap="round"/><path d="M998 607 C993 604 973 610 965 593 C961 601 973 594 977 582" fill="none" stroke="#ffffff" stroke-width="1.3" stroke-linecap="round"/><path d="M1043 578 C1061 584 1074 572 1074 555 C1071 544 1033 555 1025 564" fill="none" stroke="#dde1dd" stroke-width="2.5" stroke-linecap="round"/><path d="M1043 578 C1061 584 1074 572 1074 555 C1071 544 1033 555 1025 564" fill="none" stroke="#ffffff" stroke-width="1.4" stroke-linecap="round"/><path d="M1097 570 C1092 548 1105 532 1125 535 C1127 542 1153 547 1172 560" fill="none" stroke="#dde1dd" stroke-width="2.4" stroke-linecap="round"/><path d="M1097 570 C1092 548 1105 532 1125 535 C1127 542 1153 547 1172 560" fill="none" stroke="#ffffff" stroke-width="1.3" stroke-linecap="round"/><path d="M1152 585 C1142 568 1143 577 1138 564 C1124 551 1132 552 1126 534" fill="none" stroke="#dde1dd" stroke-width="2.4" stroke-linecap="round"/><path d="M1152 585 C1142 568 1143 577 1138 564 C1124 551 1132 552 1126 534" fill="none" stroke="#ffffff" stroke-width="1.3" stroke-linecap="round"/><path d="M1189 590 C1187 594 1182 590 1182 581 C1182 582 1166 567 1178 564" fill="none" stroke="#dde1dd" stroke-width="2.4" stroke-linecap="round"/><path d="M1189 590 C1187 594 1182 590 1182 581 C1182 582 1166 567 1178 564" fill="none" stroke="#ffffff" stroke-width="1.3" stroke-linecap="round"/><path d="M1208 633 C1213 635 1198 641 1195 661 C1216 673 1222 676 1227 673" fill="none" stroke="#dde1dd" stroke-width="2.6" stroke-linecap="round"/><path d="M1208 633 C1213 635 1198 641 1195 661 C1216 673 1222 676 1227 673" fill="none" stroke="#ffffff" stroke-width="1.5" stroke-linecap="round"/><path d="M1020 586 C1013 564 973 556 970 561 C968 564 986 555 1008 538" fill="none" stroke="#dde1dd" stroke-width="2.6" stroke-linecap="round"/><path d="M1020 586 C1013 564 973 556 970 561 C968 564 986 555 1008 538" fill="none" stroke="#ffffff" stroke-width="1.5" stroke-linecap="round"/><path d="M1197 635 C1186 650 1203 657 1205 656 C1207 648 1172 671 1166 674" fill="none" stroke="#dde1dd" stroke-width="2.8" stroke-linecap="round"/><path d="M1197 635 C1186 650 1203 657 1205 656 C1207 648 1172 671 1166 674" fill="none" stroke="#ffffff" stroke-width="1.7" stroke-linecap="round"/><path d="M1054 530 C1054 529 1032 532 1029 538 C1012 536 1032 531 1014 532" fill="none" stroke="#dde1dd" stroke-width="2.7" stroke-linecap="round"/><path d="M1054 530 C1054 529 1032 532 1029 538 C1012 536 1032 531 1014 532" fill="none" stroke="#ffffff" stroke-width="1.6" stroke-linecap="round"/><path d="M1034 600 C1042 603 1056 620 1059 612 C1056 616 1035 590 1024 584" fill="none" stroke="#dde1dd" stroke-width="2.7" stroke-linecap="round"/><path d="M1034 600 C1042 603 1056 620 1059 612 C1056 616 1035 590 1024 584" fill="none" stroke="#ffffff" stroke-width="1.6" stroke-linecap="round"/><path d="M1040 542 C1025 535 1025 559 1010 548 C1001 563 998 551 990 562" fill="none" stroke="#dde1dd" stroke-width="2.3" stroke-linecap="round"/><path d="M1040 542 C1025 535 1025 559 1010 548 C1001 563 998 551 990 562" fill="none" stroke="#ffffff" stroke-width="1.2" stroke-linecap="round"/><path d="M1001 571 C993 558 1001 544 989 548 C1007 546 1033 556 1038 546" fill="none" stroke="#dde1dd" stroke-width="2.5" stroke-linecap="round"/><path d="M1001 571 C993 558 1001 544 989 548 C1007 546 1033 556 1038 546" fill="none" stroke="#ffffff" stroke-width="1.4" stroke-linecap="round"/><path d="M1111 604 C1129 615 1135 591 1147 597 C1144 615 1139 600 1121 612" fill="none" stroke="#dde1dd" stroke-width="2.3" stroke-linecap="round"/><path d="M1111 604 C1129 615 1135 591 1147 597 C1144 615 1139 600 1121 612" fill="none" stroke="#ffffff" stroke-width="1.2" stroke-linecap="round"/><path d="M1058 531 C1076 531 1083 543 1078 556 C1063 548 1083 561 1070 572" fill="none" stroke="#dde1dd" stroke-width="2.4" stroke-linecap="round"/><path d="M1058 531 C1076 531 1083 543 1078 556 C1063 548 1083 561 1070 572" fill="none" stroke="#ffffff" stroke-width="1.3" stroke-linecap="round"/><path d="M1135 598 C1119 594 1092 592 1086 586 C1101 572 1111 586 1132 578" fill="none" stroke="#dde1dd" stroke-width="2.2" stroke-linecap="round"/><path d="M1135 598 C1119 594 1092 592 1086 586 C1101 572 1111 586 1132 578" fill="none" stroke="#ffffff" stroke-width="1.1" stroke-linecap="round"/><path d="M1210 630 C1194 647 1189 645 1169 660 C1184 657 1189 682 1187 671" fill="none" stroke="#dde1dd" stroke-width="2.6" stroke-linecap="round"/><path d="M1210 630 C1194 647 1189 645 1169 660 C1184 657 1189 682 1187 671" fill="none" stroke="#ffffff" stroke-width="1.5" stroke-linecap="round"/><path d="M1125 521 C1131 523 1126 504 1124 510 C1119 525 1139 505 1139 519" fill="none" stroke="#dde1dd" stroke-width="2.8" stroke-linecap="round"/><path d="M1125 521 C1131 523 1126 504 1124 510 C1119 525 1139 505 1139 519" fill="none" stroke="#ffffff" stroke-width="1.7" stroke-linecap="round"/><path d="M1029 550 C1037 557 1043 550 1051 557 C1048 556 1030 543 1019 527" fill="none" stroke="#dde1dd" stroke-width="2.4" stroke-linecap="round"/><path d="M1029 550 C1037 557 1043 550 1051 557 C1048 556 1030 543 1019 527" fill="none" stroke="#ffffff" stroke-width="1.3" stroke-linecap="round"/><path d="M1059 558 C1071 540 1093 531 1097 525 C1093 532 1080 531 1080 519" fill="none" stroke="#dde1dd" stroke-width="2.2" stroke-linecap="round"/><path d="M1059 558 C1071 540 1093 531 1097 525 C1093 532 1080 531 1080 519" fill="none" stroke="#ffffff" stroke-width="1.1" stroke-linecap="round"/><path d="M1060 519 C1056 515 1024 530 1022 538 C1036 548 1028 551 1046 560" fill="none" stroke="#dde1dd" stroke-width="2.3" stroke-linecap="round"/><path d="M1060 519 C1056 515 1024 530 1022 538 C1036 548 1028 551 1046 560" fill="none" stroke="#ffffff" stroke-width="1.2" stroke-linecap="round"/><path d="M1123 583 C1122 564 1111 582 1093 565 C1108 565 1128 574 1138 557" fill="none" stroke="#dde1dd" stroke-width="2.6" stroke-linecap="round"/><path d="M1123 583 C1122 564 1111 582 1093 565 C1108 565 1128 574 1138 557" fill="none" stroke="#ffffff" stroke-width="1.5" stroke-linecap="round"/><path d="M1067 623 C1074 610 1074 633 1066 630 C1064 621 1066 617 1065 632" fill="none" stroke="#dde1dd" stroke-width="2.5" stroke-linecap="round"/><path d="M1067 623 C1074 610 1074 633 1066 630 C1064 621 1066 617 1065 632" fill="none" stroke="#ffffff" stroke-width="1.4" stroke-linecap="round"/><path d="M1151 566 C1165 565 1165 592 1158 598 C1136 582 1128 604 1113 588" fill="none" stroke="#dde1dd" stroke-width="2.4" stroke-linecap="round"/><path d="M1151 566 C1165 565 1165 592 1158 598 C1136 582 1128 604 1113 588" fill="none" stroke="#ffffff" stroke-width="1.3" stroke-linecap="round"/><path d="M1206 600 C1198 621 1187 625 1169 625 C1177 643 1156 648 1153 647" fill="none" stroke="#dde1dd" stroke-width="2.5" stroke-linecap="round"/><path d="M1206 600 C1198 621 1187 625 1169 625 C1177 643 1156 648 1153 647" fill="none" stroke="#ffffff" stroke-width="1.4" stroke-linecap="round"/><path d="M1021 511 C999 504 998 497 979 490 C971 492 981 494 971 500" fill="none" stroke="#dde1dd" stroke-width="2.2" stroke-linecap="round"/><path d="M1021 511 C999 504 998 497 979 490 C971 492 981 494 971 500" fill="none" stroke="#ffffff" stroke-width="1.1" stroke-linecap="round"/><path d="M1213 604 C1210 604 1195 582 1199 595 C1180 599 1170 600 1170 614" fill="none" stroke="#dde1dd" stroke-width="2.2" stroke-linecap="round"/><path d="M1213 604 C1210 604 1195 582 1199 595 C1180 599 1170 600 1170 614" fill="none" stroke="#ffffff" stroke-width="1.1" stroke-linecap="round"/></g>
<polyline points="960.0,503.0 1040.0,488.0 1112.0,472.0" fill="none" stroke="#fdfdfc" stroke-width="3.0" stroke-linejoin="round" stroke-linecap="round" />
<polyline points="1112.0,505.0 1180.0,500.0 1237.0,498.0" fill="none" stroke="#fdfdfc" stroke-width="2.6" stroke-linejoin="round" stroke-linecap="round" />
<path d="M1110 480 C1100 520 1095 570 1120 610 C1135 630 1150 640 1160 642" fill="none" stroke="#fdfdfc" stroke-width="3.0" stroke-linecap="round"/>
<path d="M1237 520 C1215 540 1200 570 1190 600 C1185 620 1175 635 1170 642" fill="none" stroke="#fdfdfc" stroke-width="2.4" stroke-linecap="round"/>
<polyline points="470.0,266.0 1237.0,238.0" fill="none" stroke="#fdfdfc" stroke-width="3.2" stroke-linejoin="round" stroke-linecap="round" />
<polyline points="760.0,164.0 766.0,360.0" fill="none" stroke="#fdfdfc" stroke-width="3.0" stroke-linejoin="round" stroke-linecap="round" />
<polyline points="895.0,164.0 900.0,355.0" fill="none" stroke="#fdfdfc" stroke-width="3.4" stroke-linejoin="round" stroke-linecap="round" />
<polyline points="494.0,476.0 700.0,465.0 1000.0,452.0 1104.0,446.0 1237.0,440.0" fill="none" stroke="#fdfdfc" stroke-width="3.0" stroke-linejoin="round" stroke-linecap="round" />
<polyline points="848.0,458.0 852.0,642.0" fill="none" stroke="#fdfdfc" stroke-width="3.6" stroke-linejoin="round" stroke-linecap="round" />
<polyline points="1000.0,200.0 1010.0,330.0" fill="none" stroke="#fdfdfc" stroke-width="2.6" stroke-linejoin="round" stroke-linecap="round" />
<polyline points="1158.0,164.0 1168.0,300.0 1182.0,420.0" fill="none" stroke="#fdfdfc" stroke-width="2.8" stroke-linejoin="round" stroke-linecap="round" />
<polyline points="1237.0,345.0 1104.0,360.0" fill="none" stroke="#fdfdfc" stroke-width="2.6" stroke-linejoin="round" stroke-linecap="round" />
<polygon points="352.0,164.0 531.0,164.0 518.0,176.0 506.0,186.0 497.0,198.0 478.0,206.0 468.0,214.0 463.0,226.0 452.0,240.0 448.0,256.0 449.0,270.0 454.0,286.0 461.0,310.0 466.0,340.0 469.0,364.0 474.0,420.0 480.0,480.0 486.0,560.0 492.0,642.0 352.0,642.0" fill="#d4d9dc" />
<polygon points="456.0,292.0 462.0,320.0 467.0,364.0 474.0,420.0 481.0,480.0 487.0,560.0 493.0,642.0 506.0,642.0 498.0,560.0 490.0,480.0 484.0,420.0 478.0,364.0 472.0,320.0 466.0,292.0" fill="#f7f7f5" />
<polyline points="486.0,280.0 492.0,380.0 498.0,480.0 502.0,560.0 504.0,642.0" fill="none" stroke="#fdfdfc" stroke-width="2.2" stroke-linejoin="round" stroke-linecap="round" />
<text x="895" y="246" text-anchor="middle" dominant-baseline="central" style="font-size:10.4px;fill:#8b9095;letter-spacing:0.2px;" font-weight="bold">RICHMOND</text>
<text x="895" y="258" text-anchor="middle" dominant-baseline="central" style="font-size:10.4px;fill:#8b9095;letter-spacing:0.2px;" font-weight="bold">DISTRICT</text>
<text x="746" y="262" text-anchor="middle" dominant-baseline="central" style="font-size:9.6px;fill:#8e9297;letter-spacing:0.4px;" transform="rotate(-2.2 746 262)" >Geary Boulevard</text>
<text x="980" y="248" text-anchor="middle" dominant-baseline="central" style="font-size:9.6px;fill:#8e9297;letter-spacing:0.4px;" transform="rotate(-2.2 980 248)" >Geary Boulevard</text>
<text x="1196" y="223" text-anchor="middle" dominant-baseline="central" style="font-size:9.6px;fill:#8e9297;letter-spacing:0.4px;" transform="rotate(-8 1196 223)" >Geary Boulevard</text>
<text x="1200" y="350" text-anchor="start" dominant-baseline="central" style="font-size:9.6px;fill:#8e9297;letter-spacing:0.4px;" transform="rotate(-6 1200 350)" >Fell Str</text>
<text x="1200" y="362" text-anchor="start" dominant-baseline="central" style="font-size:9.6px;fill:#8e9297;letter-spacing:0.4px;" transform="rotate(-6 1200 362)" >Oak Str</text>
<text x="457" y="260" text-anchor="middle" dominant-baseline="central" style="font-size:8.6px;fill:#8e9297;letter-spacing:0.1px;font-style:italic;" >Main pool house</text>
<text x="482" y="342" text-anchor="middle" dominant-baseline="central" style="font-size:9.4px;fill:#8e9297;letter-spacing:0.3px;" transform="rotate(80 482 342)" >Great Highway</text>
<text x="666" y="382" text-anchor="middle" dominant-baseline="central" style="font-size:8.6px;fill:#8e9297;letter-spacing:0px;font-style:italic;" >Spreckels Lake</text>
<text x="583" y="401" text-anchor="middle" dominant-baseline="central" style="font-size:8.6px;fill:#8e9297;letter-spacing:0px;font-style:italic;" >North Lake</text>
<text x="799" y="388" text-anchor="middle" dominant-baseline="central" style="font-size:8.6px;fill:#8e9297;letter-spacing:0px;font-style:italic;" >Lloyd Lake</text>
<text x="608" y="436" text-anchor="middle" dominant-baseline="central" style="font-size:8.6px;fill:#8e9297;letter-spacing:0px;font-style:italic;" >Middle Lake</text>
<text x="752" y="444" text-anchor="middle" dominant-baseline="central" style="font-size:8.6px;fill:#8e9297;letter-spacing:0px;font-style:italic;" >Mallard Lake</text>
<text x="890" y="409" text-anchor="middle" dominant-baseline="central" style="font-size:8.6px;fill:#8e9297;letter-spacing:0px;font-style:italic;" >Blue Heron Lake</text>
<text x="1008" y="384" text-anchor="middle" dominant-baseline="central" style="font-size:8.6px;fill:#8e9297;letter-spacing:0px;font-style:italic;" >Lily Pond</text>
<text x="1088" y="407" text-anchor="middle" dominant-baseline="central" style="font-size:8.6px;fill:#8e9297;letter-spacing:0px;font-style:italic;" >Alvord Lake</text>
<text x="938" y="447" text-anchor="middle" dominant-baseline="central" style="font-size:8.6px;fill:#8e9297;letter-spacing:0px;font-style:italic;" >Bamboo Pond</text>
<text x="729" y="464" text-anchor="middle" dominant-baseline="central" style="font-size:9.6px;fill:#8e9297;letter-spacing:0.4px;" transform="rotate(-2 729 464)" >Lincoln Way</text>
<text x="914" y="454" text-anchor="middle" dominant-baseline="central" style="font-size:9.6px;fill:#8e9297;letter-spacing:0.4px;" transform="rotate(-1.5 914 454)" >Lincoln Way</text>
<text x="566" y="472" text-anchor="middle" dominant-baseline="central" style="font-size:9.6px;fill:#b5b8bb;letter-spacing:0.4px;" transform="rotate(-2 566 472)" >Lincoln Way</text>
<text x="837" y="421" text-anchor="middle" dominant-baseline="central" style="font-size:9.4px;fill:#8e9297;letter-spacing:0.3px;" transform="rotate(76 837 421)" >Crossover Drive</text>
<text x="849" y="541" text-anchor="middle" dominant-baseline="central" style="font-size:9.4px;fill:#8e9297;letter-spacing:0.3px;" transform="rotate(88 849 541)" >19th Avenue</text>
<text x="654" y="623" text-anchor="middle" dominant-baseline="central" style="font-size:10.4px;fill:#8b9095;letter-spacing:0.2px;" font-weight="bold">DISTRICT</text>
<text x="1002" y="626" text-anchor="middle" dominant-baseline="central" style="font-size:8.6px;fill:#8e9297;letter-spacing:0px;font-style:italic;" >Laguna Honda</text>
<text x="1152" y="575" text-anchor="middle" dominant-baseline="central" style="font-size:8.6px;fill:#8e9297;letter-spacing:0px;font-style:italic;" >Twin Peaks</text>
<text x="1152" y="585" text-anchor="middle" dominant-baseline="central" style="font-size:8.6px;fill:#8e9297;letter-spacing:0px;font-style:italic;" >Reservoir</text>
<text x="1213" y="520" text-anchor="middle" dominant-baseline="central" style="font-size:9.4px;fill:#8e9297;letter-spacing:0.3px;" transform="rotate(-35 1213 520)" >Market Stre</text>
<polyline points="487,377 978,348 1088,330 1105,443 1066,451 1046,445 1032,444 934,451" fill="none" stroke="#2b72de" stroke-width="3.3" stroke-linejoin="round" stroke-linecap="round"/>
<polyline points="487,377 492,410 494,476 634,467" fill="none" stroke="#2b72de" stroke-width="3.3" stroke-linejoin="round" stroke-linecap="round"/>
<circle cx="649.5" cy="466.5" r="15" fill="#2f7ae0" stroke="#1d5cc0" stroke-width="1.1"/>
<path d="M641 466.5 L658 459 L654 466.5 L658 474 Z" fill="#fff"/>
<text x="649" y="441.5" text-anchor="middle" dominant-baseline="central" style="font-size:11px;fill:#111;letter-spacing:-0.1px;font-weight:bold;" >Bus A</text>
</g></svg>
<div style="position:absolute;left:10px;top:9px;width:28px;height:57px;background:#fff;border:1.5px solid rgba(0,0,0,.55);border-radius:14px;box-shadow:0 1px 5px rgba(0,0,0,.45)"></div>
<div class="a" style="left:17px;top:18px;width:14px;height:14px"><div class="a" style="left:0;top:6px;width:13px;height:1.5px;background:#444"></div><div class="a" style="left:5.75px;top:0.5px;width:1.5px;height:12.5px;background:#444"></div></div>
<div class="a" style="left:17px;top:52px;width:13px;height:1.5px;background:#444"></div>
<div style="position:absolute;left:10px;top:75px;width:28px;height:28px;background:#fff;border:1.5px solid rgba(0,0,0,.55);border-radius:50%;box-shadow:0 1px 5px rgba(0,0,0,.45)"></div>
<svg class="i" style="left:16px;top:81px" width="16" height="16" viewBox="0 0 24 24"><path fill="#555" d="M11.99 18.54l-7.37-5.73L3 14.07l9 7 9-7-1.63-1.27-7.38 5.74zM12 16l7.36-5.73L21 9l-9-7-9 7 1.63 1.27L12 16z"/></svg>
<div class="a" style="right:0;bottom:0;height:13px;padding:0 5px 0 4px;background:rgba(255,255,255,.8);font-size:9.8px;line-height:13px;color:#333;letter-spacing:-.05px"><span style="display:inline-block;width:10px;height:7px;vertical-align:-0px;background:linear-gradient(#4c7be1 50%,#ffd500 50%);margin-right:2px"></span><span style="color:#0078a8">Leaflet</span> | © <span style="color:#0078a8">OpenStreetMap</span> contributors © <span style="color:#0078a8">CARTO</span></div>
  </div>
  <!-- slider -->
  <div class="a" style="left:39px;top:600px;width:838px;height:4px;background:#c3dcd7;border-radius:2px"></div>
  <div class="a" style="left:30px;top:593px;width:18px;height:18px;border-radius:50%;background:#006b5e"></div>
  <div class="a" style="left:29px;top:634px;font-size:13.3px;color:rgba(0,0,0,.87);letter-spacing:.1px;line-height:16px">2025-06-02 11:04:04</div>
  <div class="a" style="left:358.3px;top:627.5px;width:29px;height:29px;border-radius:50%;background:#cfcfcf;"></div><svg class="i" style="left:362.8px;top:632.0px" width="20" height="20" viewBox="0 0 24 24"><path fill="rgba(0,0,0,.42)" d="M11 18V6l-8.5 6 8.5 6zm.5-6l8.5 6V6l-8.5 6z"/></svg>
  <div class="a" style="left:398.3px;top:627.5px;width:29px;height:29px;border-radius:50%;background:#cfcfcf;"></div><svg class="i" style="left:402.8px;top:632.0px" width="20" height="20" viewBox="0 0 24 24"><path fill="rgba(0,0,0,.42)" d="M6 6h2v12H6zm3.5 6l8.5 6V6z"/></svg>
  <div class="a" style="left:438.9px;top:623.5px;width:37px;height:37px;border-radius:50%;background:#f3f3f3;box-shadow:0 2px 4px rgba(0,0,0,.22),0 1px 2px rgba(0,0,0,.12);"></div><svg class="i" style="left:446.4px;top:631.0px" width="22" height="22" viewBox="0 0 24 24"><path fill="rgba(0,0,0,.75)" d="M8 5v14l11-7z"/></svg>
  <div class="a" style="left:486.5px;top:627.5px;width:29px;height:29px;border-radius:50%;background:#f3f3f3;box-shadow:0 2px 4px rgba(0,0,0,.22),0 1px 2px rgba(0,0,0,.12);"></div><svg class="i" style="left:491.0px;top:632.0px" width="20" height="20" viewBox="0 0 24 24"><path fill="rgba(0,0,0,.75)" d="M6 18l8.5-6L6 6v12zM16 6v12h2V6h-2z"/></svg>
  <div class="a" style="left:527.3px;top:627.5px;width:29px;height:29px;border-radius:50%;background:#f3f3f3;box-shadow:0 2px 4px rgba(0,0,0,.22),0 1px 2px rgba(0,0,0,.12);"></div><svg class="i" style="left:531.8px;top:632.0px" width="20" height="20" viewBox="0 0 24 24"><path fill="rgba(0,0,0,.75)" d="M4 18l8.5-6L4 6v12zm9-12v12l8.5-6L13 6z"/></svg>
  <div class="a" style="left:850px;top:632px;font-size:15px;color:rgba(0,0,0,.87);line-height:18px">1x</div>
  <svg class="i" style="left:870px;top:632px" width="20" height="20" viewBox="0 0 24 24"><path fill="rgba(0,0,0,.54)" d="M7 10l5 5 5-5z"/></svg>
  <div class="a" style="left:860px;top:699px;font-size:13.2px;color:#006b5e;letter-spacing:.15px;line-height:16px;-webkit-text-stroke:.35px #006b5e">Close</div>
</div>

</body></html>
